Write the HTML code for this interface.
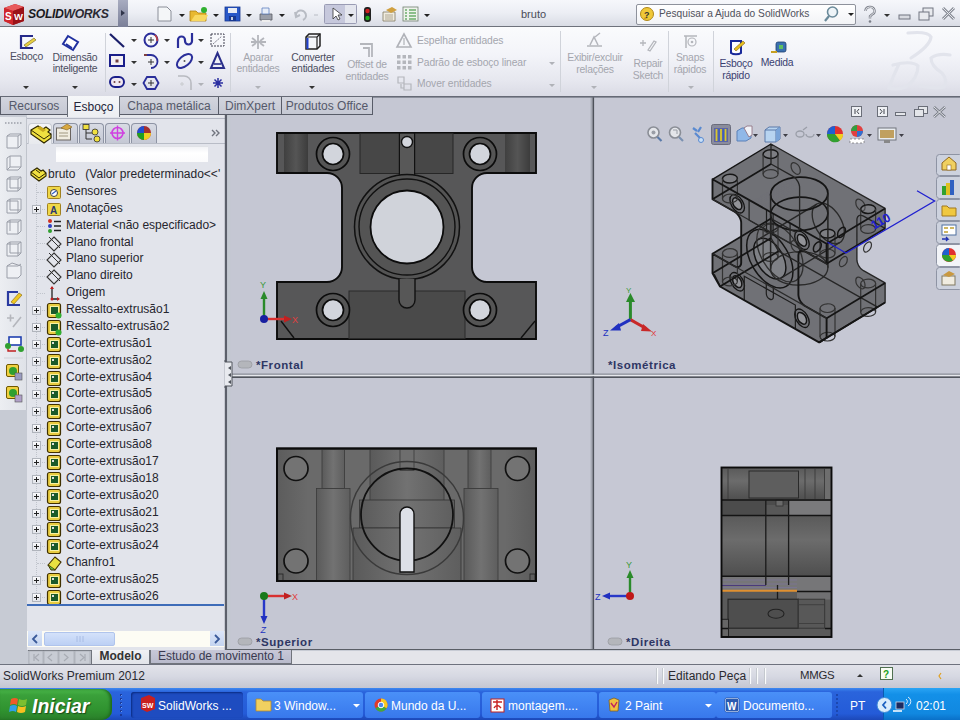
<!DOCTYPE html>
<html><head><meta charset="utf-8">
<style>
*{margin:0;padding:0;box-sizing:border-box}
html,body{width:960px;height:720px;overflow:hidden;background:#d6d9df;font-family:"Liberation Sans",sans-serif;font-size:11px;color:#000}
.a{position:absolute}
.t{position:absolute;white-space:nowrap;line-height:1}
#title{left:0;top:0;width:960px;height:27px;background:linear-gradient(#f6f7fb 0%,#eceef4 50%,#d9dce5 100%);border-bottom:1px solid #6e727c}
#logo{left:0;top:0;width:118px;height:26px;background:linear-gradient(#e8e9f0,#c9ccd7)}
#ribbon{left:0;top:27px;width:960px;height:69px;background:linear-gradient(#fafbfd 0%,#f3f4f9 40%,#e6e7ef 78%,#dadbe5 100%)}
#tabs{left:0;top:96px;width:960px;height:19px;background:#d0d3da;border-top:1.5px solid #666a76}
.tab{position:absolute;z-index:3;top:97px;height:18px;background:linear-gradient(#d3d5de,#c5c8d3);border:1px solid #585c68;border-top:none;color:#55596a;font-size:12px;text-align:center;line-height:18px}
#lefttb{left:0;top:115px;width:27px;height:535px;background:#c7cbd4}
#lefttb2{left:0;top:117px;width:27px;height:293px;background:linear-gradient(90deg,#eceef2,#dfe2e8);border-right:1px solid #c0c4cc}
#fm{left:27px;top:115px;width:199px;height:535px;background:#e5e7ec}
#vp{left:226px;top:97px;width:734px;height:553px;background:#c8cbd3}
#btabs{left:0;top:650px;width:960px;height:15px;background:#c7cbd4}
#status{left:0;top:664px;width:960px;height:24px;background:linear-gradient(#e2e3ea 0%,#d6d8e2 50%,#c4c6d2 100%);border-top:1.5px solid #6e727e}
#taskbar{left:0;top:688px;width:960px;height:32px;background:linear-gradient(#3d88f0 0%,#2a64dc 12%,#245bd8 80%,#1c48b8 100%)}
.rt{color:#4b4d60;font-size:10.4px;letter-spacing:-.25px;text-align:center}
.dis{color:#a4a6ae}
.arr{position:absolute;width:0;height:0;border-left:3px solid transparent;border-right:3px solid transparent;border-top:3px solid #333}
</style></head><body>
<!-- TITLE BAR -->
<div id="title" class="a"></div>
<div id="logo" class="a"></div>
<div class="a" style="left:118px;top:0;width:10px;height:27px;background:linear-gradient(#a8acc0,#7a7f98)"></div>
<div class="arr" style="left:121px;top:10px;border-top:3px solid transparent;border-bottom:3px solid transparent;border-left:4px solid #30354a;border-right:none"></div>


<!-- logo -->
<svg class="a" style="left:2px;top:2px" width="26" height="24" viewBox="0 0 26 24">
<path d="M2,6 L13,2 L22,5 L22,19 L11,23 L2,19 Z" fill="#b81c22"/>
<path d="M2,6 L13,2 L22,5 L11,9 Z" fill="#e85a5c"/>
<path d="M11,9 L22,5 L22,19 L11,23 Z" fill="#9a1218"/>
<path d="M2,6 L11,9 L11,23 L2,19 Z" fill="#d0262c"/>
<text x="3" y="18" font-size="10" font-weight="bold" fill="#fff" font-family="Liberation Sans">S</text>
<text x="12" y="18" font-size="9.5" font-weight="bold" fill="#fff" font-family="Liberation Sans">W</text>
</svg>
<div class="t" style="left:28px;top:8px;font-size:12.2px;font-weight:bold;font-style:italic;color:#1a1a22;letter-spacing:-.35px">SOLID<span style="font-weight:bold;color:#2a2a34">WORKS</span></div>
<!-- quick access -->
<svg class="a" style="left:150px;top:4px" width="290" height="20" viewBox="150 4 290 20">
<path d="M158,7 H167 L171,11 V21 H158 Z" fill="#f4f6f8" stroke="#8a8e98" stroke-width="1"/>
<path d="M179,14 h6 l-3,3 z M213,14 h6 l-3,3 z M246,14 h6 l-3,3 z M279,14 h6 l-3,3 z M424,14 h6 l-3,3 z" fill="#222"/>
<path d="M190,11 h6 l2,2 h8 v8 h-16 z" fill="#e8b830" stroke="#b08010" stroke-width=".8"/>
<path d="M191,21 l4,-6 h13 l-3,6 z" fill="#f8d860"/>
<circle cx="204" cy="10" r="3" fill="#30b030"/>
<rect x="225" y="7" width="15" height="14" fill="#2858c8" stroke="#183890" stroke-width=".8"/>
<rect x="228" y="8" width="9" height="5" fill="#e8ecf4"/>
<rect x="229" y="16" width="7" height="5" fill="#183890"/>
<rect x="231" y="17" width="2" height="3" fill="#c8d0e0"/>
<path d="M260,14 h12 v6 h-12 z" fill="#9a9ea8" stroke="#5a5e66" stroke-width=".8"/>
<path d="M262,8 h7 v6 h-7 z" fill="#e8eef8" stroke="#6080c0" stroke-width=".8"/>
<path d="M262,20 h8 v2 h-8 z" fill="#eee" />
<path d="M296,16 a5,5 0 1 1 7,4 M295,12 l1,5 l4,-2" fill="none" stroke="#b8bcc4" stroke-width="2"/>
<path d="M314,15 h4" stroke="#b8bcc4" stroke-width="1"/>
<rect x="324.5" y="4.5" width="32" height="19" fill="#c6c8dc" stroke="#9a9cb4" stroke-width="1" rx="1"/>
<rect x="345" y="5" width="11" height="18" fill="#e4e6ee"/>
<path d="M333,8 V19 L336,16 L338,20 L340,19 L338,15 L342,15 Z" fill="#fff" stroke="#333" stroke-width=".8"/>
<path d="M348,14 h6 l-3,3 z" fill="#222"/>
<rect x="364" y="7" width="7" height="15" rx="3" fill="#202020"/>
<circle cx="367.5" cy="11" r="2.2" fill="#d02020"/><circle cx="367.5" cy="18" r="2.2" fill="#20b020"/>
<path d="M383,12 h12 v9 h-12 z" fill="#f0ece0" stroke="#807860" stroke-width=".8"/>
<path d="M386,10 l6,-3 l5,3 l-6,3 z" fill="#d0a040"/>
<path d="M385,15 h8 M385,17 h8 M385,19 h8" stroke="#a09880" stroke-width=".8"/>
<rect x="403" y="7" width="15" height="14" fill="#eef2ec" stroke="#708070" stroke-width=".8"/>
<path d="M405,10 h2 M409,10 h7 M405,13 h2 M409,13 h7 M405,16 h2 M409,16 h7 M405,19 h2 M409,19 h7" stroke="#2a8a2a" stroke-width="1"/>
</svg>
<div class="t" style="left:521px;top:9px;font-size:11px;color:#4a4c58">bruto</div>
<!-- search -->
<div class="a" style="left:636px;top:4px;width:220px;height:21px;background:linear-gradient(#ffffff,#f2f3f6);border:1px solid #8e929c;border-radius:2px"></div>
<svg class="a" style="left:639px;top:6px" width="18" height="17" viewBox="0 0 18 17"><circle cx="8" cy="8" r="6.5" fill="#f0c838" stroke="#b08818" stroke-width="1"/><path d="M4,14 l2,-3 l3,1z" fill="#d0a020"/><text x="5" y="12" font-size="9" font-weight="bold" fill="#333" font-family="Liberation Sans">?</text></svg>
<div class="t" style="left:659px;top:9px;font-size:10.2px;color:#50525c">Pesquisar a Ajuda do SolidWorks</div>
<svg class="a" style="left:822px;top:5px" width="40" height="20" viewBox="822 5 40 20"><circle cx="832.5" cy="12" r="5" fill="#eef4f8" stroke="#6a8a9a" stroke-width="1.6"/><path d="M829,16 L825,21" stroke="#6a8a9a" stroke-width="2.2"/><path d="M848,13 h6 l-3,3 z" fill="#222"/></svg>
<svg class="a" style="left:860px;top:4px" width="100" height="22" viewBox="860 4 100 22">
<path d="M865.5,11 a4.5,4 0 1 1 6.5,3.5 l-2,1.8 v2.2" fill="none" stroke="#7a7e88" stroke-width="2.4"/><path d="M865.5,11 a4.5,4 0 1 1 6.5,3.5 l-2,1.8 v2.2" fill="none" stroke="#f4f5f8" stroke-width=".9"/>
<circle cx="870" cy="21.5" r="1.3" fill="#7a7e88"/>
<path d="M884,14 h6 l-3,3 z" fill="#333"/>
<rect x="899" y="15" width="11" height="4" fill="#d8dae0" stroke="#707480" stroke-width="1"/>
<rect x="923" y="8" width="10" height="8" fill="#e8eaee" stroke="#707480" stroke-width="1"/>
<rect x="919" y="12" width="10" height="8" fill="#e8eaee" stroke="#707480" stroke-width="1"/>
<path d="M943,8 l11,11 M954,8 l-11,11" stroke="#8a8e98" stroke-width="3"/>
<path d="M943,8 l11,11 M954,8 l-11,11" stroke="#e4e6ea" stroke-width="1"/>
</svg>

<!-- RIBBON -->
<div id="ribbon" class="a"></div>


<svg class="a" style="left:0;top:27px" width="960" height="69" viewBox="0 27 960 69">
<!-- separators -->
<path d="M105.5,33 V92 M230.5,33 V92 M560.5,31 V92 M668.5,31 V92 M713.5,31 V92" stroke="#d0d3da" stroke-width="1"/>
<!-- Esboco icon -->
<path d="M33,36 H21 V48 H33" fill="none" stroke="#262a8a" stroke-width="2.2"/>
<path d="M24,45 L34,38 L36,40 L26,47 Z" fill="#e8d040" stroke="#706020" stroke-width=".6"/>
<!-- dimensao icon -->
<path d="M68,36 L78,42 L73,50 L63,44 Z" fill="#fff" stroke="#2030a0" stroke-width="2"/>
<path d="M66,44 l6,4" stroke="#2030a0" stroke-width="1.6"/>
<!-- arrows -->
<path d="M23,86 h6 l-3,3 z M72,86 h6 l-3,3 z M131,39 h6 l-3,3 z M164,39 h6 l-3,3 z M198,39 h6 l-3,3 z M131,61 h6 l-3,3 z M164,61 h6 l-3,3 z M198,61 h6 l-3,3 z M131,83 h6 l-3,3 z M309,86 h6 l-3,3 z" fill="#333"/>
<path d="M255,86 h6 l-3,3 z M198,83 h6 l-3,3 z M549,62 h6 l-3,3 z M549,84 h6 l-3,3 z M591,86 h6 l-3,3 z M688,86 h6 l-3,3 z" fill="#b0b2b8"/>
<!-- line -->
<path d="M110,34 L124,47" stroke="#1a1e6a" stroke-width="2.2"/>
<!-- circle -->
<circle cx="151" cy="40" r="6.5" fill="none" stroke="#2a2e9a" stroke-width="2"/>
<path d="M148,40 h6 M151,37 v6" stroke="#333" stroke-width="1"/>
<path d="M155,35 a6.5,6.5 0 0 1 2,6" stroke="#c04040" stroke-width="1.6" fill="none"/>
<!-- spline -->
<path d="M178,48 V40 a3.5,3.5 0 0 1 7,0 v1 a3.5,3.5 0 0 0 7,0 V33" fill="none" stroke="#2a2e9a" stroke-width="2.2"/>
<!-- grid -->
<rect x="211" y="34" width="13" height="12" fill="none" stroke="#404050" stroke-width="1" stroke-dasharray="2,1"/>
<path d="M213,44 L222,36" stroke="#606070" stroke-width=".8" stroke-dasharray="2,1"/>
<!-- rect -->
<rect x="110" y="55" width="14" height="11" fill="#f4f0f4" stroke="#1a1e8a" stroke-width="2"/>
<rect x="115.5" y="59.5" width="3" height="3" fill="#704040"/>
<!-- arc -->
<path d="M144,55 H151 a6.5,6.5 0 0 1 0,13" fill="none" stroke="#2a2e9a" stroke-width="1.8"/>
<path d="M144,55 h3" stroke="#804040" stroke-width="2"/>
<path d="M148,62 h6 M151,59 v6" stroke="#333" stroke-width="1"/>
<!-- ellipse -->
<ellipse cx="184.5" cy="61" rx="9" ry="5" transform="rotate(-40 184.5 61)" fill="none" stroke="#2a2e9a" stroke-width="2"/>
<circle cx="184.5" cy="61" r="1" fill="#555"/>
<!-- text A -->
<path d="M211,68 L217.5,53 L224,68 Z" fill="none" stroke="#2a2e8a" stroke-width="2"/>
<path d="M214,64 h7" stroke="#2a2e8a" stroke-width="1.6"/>
<!-- slot -->
<rect x="110" y="77" width="14" height="10" rx="5" fill="#f0e8f0" stroke="#1a1e8a" stroke-width="2"/>
<circle cx="114.5" cy="82" r="1" fill="#704040"/><circle cx="119.5" cy="82" r="1" fill="#704040"/>
<!-- polygon -->
<path d="M147,77 h8 l3.5,6 l-3.5,6 h-8 l-3.5,-6 z" fill="none" stroke="#2a2e9a" stroke-width="1.8"/>
<path d="M148,83 h6 M151,80 v6" stroke="#333" stroke-width="1"/>
<!-- fillet (disabled) -->
<path d="M178,76 h6 a7,7 0 0 1 7,7 v7" fill="none" stroke="#b8bac0" stroke-width="1.6"/>
<path d="M180,84 h4 M182,82 v4" stroke="#c8cace" stroke-width="1"/>
<!-- point -->
<path d="M213,83 h10 M218,78 v10 M214.5,79.5 l7,7 M221.5,79.5 l-7,7" stroke="#2a2ea0" stroke-width="1.5"/>
<!-- Aparar -->
<path d="M251,42 h15 M258,35 v14 M252,38 l4,3 M264,38 l-4,3 M252,46 l4,-3 M264,46 l-4,-3" stroke="#b4b6bc" stroke-width="1.8"/>
<!-- converter -->
<path d="M306,37 l3,-3 h11 v12 l-3,3 h-11 z" fill="#f4f6fa" stroke="#202020" stroke-width="1.5"/>
<path d="M306,37 h11 v12 M317,37 l3,-3" fill="none" stroke="#202020" stroke-width="1.2"/>
<path d="M307.5,38 v11" stroke="#2040d0" stroke-width="2"/>
<!-- offset -->
<path d="M360,44 h12 v13 M363,48 h6 v9" fill="none" stroke="#b4b6bc" stroke-width="1.8"/>
<!-- espelhar -->
<path d="M404,34 L397,47 H411 Z" fill="none" stroke="#b0b2b8" stroke-width="1.6"/>
<path d="M404,38 v7" stroke="#b0b2b8" stroke-width="1.2"/>
<!-- padrao grid -->
<g fill="#b4b6bc"><rect x="397" y="55" width="3.5" height="3.5"/><rect x="402.5" y="55" width="3.5" height="3.5"/><rect x="408" y="55" width="3.5" height="3.5"/>
<rect x="397" y="60.5" width="3.5" height="3.5"/><rect x="402.5" y="60.5" width="3.5" height="3.5"/><rect x="408" y="60.5" width="3.5" height="3.5"/>
<rect x="397" y="66" width="3.5" height="3.5"/><rect x="402.5" y="66" width="3.5" height="3.5"/><rect x="408" y="66" width="3.5" height="3.5"/></g>
<!-- mover -->
<path d="M398,77 h6 v6 h-6 z M404,84 h7 v6 h-7 z M401,84 v4 h3" fill="none" stroke="#b4b6bc" stroke-width="1.2"/>
<!-- exibir relations -->
<path d="M587,46 h15 M590,45 l4,-8 l4,8 M595,37 l5,-4" stroke="#b4b6bc" stroke-width="1.5" fill="none"/>
<!-- repair -->
<path d="M640,43 h6 M643,40 v6 M648,50 l6,-9 l2,1 l-6,9 z" stroke="#b4b6bc" stroke-width="1.3" fill="none"/>
<!-- snaps -->
<path d="M684,36 h13 M686,36 v12" stroke="#b4b6bc" stroke-width="1.5"/>
<circle cx="692" cy="42" r="4" fill="none" stroke="#b4b6bc" stroke-width="1.2"/><circle cx="692" cy="42" r="1.3" fill="#b4b6bc"/>
<!-- esboco rapido -->
<path d="M731,41 h10 v12 a6,3 0 0 1 -10,0 z" fill="#fff" stroke="#1a2a9a" stroke-width="2"/>
<path d="M734,49 l9,-8 l2,2 l-9,8 z" fill="#e8c020" stroke="#806010" stroke-width=".6"/>
<!-- medida -->
<rect x="776" y="42" width="10" height="10" rx="2" fill="#3a70b0" stroke="#204070" stroke-width=".8"/>
<rect x="779" y="45" width="4" height="4" fill="#60c060"/>
<path d="M771,52 h6" stroke="#c8a020" stroke-width="2"/>
<!-- DS watermark -->
<g fill="none" stroke="#e2e4ec" stroke-width="3.2" stroke-linecap="round">
<path d="M908,33 Q928,31 931,37 Q930,46 911,58"/>
<path d="M893,65 Q912,60 918,66 Q918,78 906,87 Q897,90 889,88 Q893,76 899,64"/>
<path d="M950,55 Q938,53 931,58 Q931,66 942,73 Q948,80 944,87 Q935,89 920,86"/>
</g>
</svg>
<div class="t rt" style="left:6px;top:52px;width:41px">Esboço</div>
<div class="t rt" style="left:47px;top:52px;width:56px;line-height:11px">Dimensão<br>inteligente</div>
<div class="t rt dis" style="left:233px;top:52px;width:50px;line-height:11px">Aparar<br>entidades</div>
<div class="t rt" style="left:286px;top:52px;width:54px;line-height:11px">Converter<br>entidades</div>
<div class="t rt dis" style="left:342px;top:59px;width:50px;line-height:12px">Offset de<br>entidades</div>
<div class="t dis" style="left:417px;top:36px;font-size:10.3px;letter-spacing:-.1px">Espelhar entidades</div>
<div class="t dis" style="left:417px;top:58px;font-size:10.3px;letter-spacing:-.1px">Padrão de esboço linear</div>
<div class="t dis" style="left:417px;top:79px;font-size:10.3px;letter-spacing:-.1px">Mover entidades</div>
<div class="t rt dis" style="left:563px;top:52px;width:64px;line-height:12px">Exibir/excluir<br>relações</div>
<div class="t rt dis" style="left:629px;top:58px;width:38px;line-height:12px">Repair<br>Sketch</div>
<div class="t rt dis" style="left:668px;top:52px;width:44px;line-height:12px">Snaps<br>rápidos</div>
<div class="t rt" style="left:714px;top:58px;width:44px;line-height:12px;color:#3a3e70">Esboço<br>rápido</div>
<div class="t rt" style="left:756px;top:58px;width:42px;color:#3a3e70">Medida</div>

<!-- TABS -->
<div id="tabs" class="a"></div>


<div class="tab" style="left:0;width:68px">Recursos</div>
<div class="a" style="left:67px;top:96px;width:53px;height:21px;background:linear-gradient(#f6f7f9,#eceef2);border-left:1px solid #6a6f7a;border-right:1px solid #6a6f7a;color:#24263a;font-size:12px;text-align:center;line-height:19px;padding-top:2px;z-index:4">Esboço</div>
<div class="tab" style="left:119px;width:100px">Chapa metálica</div>
<div class="tab" style="left:218px;width:64px">DimXpert</div>
<div class="tab" style="left:281px;width:92px">Produtos Office</div>

<!-- LEFT -->
<div id="lefttb" class="a"></div>
<div id="lefttb2" class="a"></div>
<div id="fm" class="a"></div>
<!--TREE-START-->
<div class="a" style="left:27px;top:117px;width:198px;height:533px;background:#e2e4eb"></div>
<div class="a" style="left:27px;top:143px;width:198px;height:1px;background:#b8bcc6"></div>
<div class="a" style="left:27px;top:118px;width:198px;height:1px;background:#b4b8c4"></div>
<div class="a" style="left:28px;top:123px;width:24px;height:21px;background:linear-gradient(#f4f5f8,#e8eaee);border:1px solid #c8ccd4;border-bottom:none;border-radius:4px 4px 0 0"></div>
<div class="a" style="left:53px;top:123px;width:25px;height:20px;background:linear-gradient(#d8dbe4,#c4c8d4);border:1px solid #8e94a4;border-bottom:none;border-radius:4px 4px 0 0"></div>
<div class="a" style="left:79px;top:123px;width:25px;height:20px;background:linear-gradient(#d8dbe4,#c4c8d4);border:1px solid #8e94a4;border-bottom:none;border-radius:4px 4px 0 0"></div>
<div class="a" style="left:105px;top:123px;width:25px;height:20px;background:linear-gradient(#d8dbe4,#c4c8d4);border:1px solid #8e94a4;border-bottom:none;border-radius:4px 4px 0 0"></div>
<div class="a" style="left:131px;top:123px;width:26px;height:20px;background:linear-gradient(#d8dbe4,#c4c8d4);border:1px solid #8e94a4;border-bottom:none;border-radius:4px 4px 0 0"></div>
<svg class="a" style="left:27px;top:117px" width="199" height="70" viewBox="27 117 199 70">
<path d="M31,130 l7,-4 l5,3 l3,-2 l4,3 l-2,2 l3,2 v4 l-7,5 l-13,-9 z" fill="#f0e040" stroke="#302800" stroke-width="1.2"/>
<path d="M31,130 l13,9 l7,-5" fill="none" stroke="#302800" stroke-width="1"/><path d="M37,128 l3,-2 l6,4 l-3,2 z" fill="#c8a820"/>
<rect x="56.5" y="128" width="14" height="12" fill="#f0ece0" stroke="#6a6460" stroke-width="1"/>
<path d="M59,133 h9 M59,136 h9" stroke="#a09880" stroke-width="1"/>
<path d="M61,128 l6,-4 l5,3 l-5,3 z" fill="#d8a840" stroke="#806020" stroke-width=".6"/>
<path d="M86,127 v12 h6 M86,133 h6" fill="none" stroke="#303030" stroke-width="1"/>
<rect x="83" y="124.5" width="6" height="5" fill="#f0e040" stroke="#303030" stroke-width=".8"/>
<circle cx="95" cy="132" r="3" fill="#f0e040" stroke="#303030" stroke-width=".8"/>
<circle cx="97" cy="139" r="3" fill="#f0e040" stroke="#303030" stroke-width=".8"/>
<circle cx="117.5" cy="133" r="5.5" fill="none" stroke="#d040e0" stroke-width="1.6"/>
<path d="M110,133 h15 M117.5,125.5 v15" stroke="#d040e0" stroke-width="1.4"/>
<circle cx="144" cy="133" r="7" fill="#e03030"/>
<path d="M144,133 L137,133 A7,7 0 0 0 144,140 Z" fill="#20a020"/>
<path d="M144,133 L144,140 A7,7 0 0 0 151,133 Z" fill="#f0d020"/>
<path d="M144,133 L137,133 A7,7 0 0 1 144,126 Z" fill="#2050d0"/>
<path d="M144,133 L144,126 A7,7 0 0 1 151,133 Z" fill="#303030" opacity=".35"/>
<path d="M212,130 l3,3 l-3,3 M216,130 l3,3 l-3,3" fill="none" stroke="#70747e" stroke-width="1.4"/>
</svg>

<div class="a" style="left:56px;top:146px;width:152px;height:16px;background:linear-gradient(#f2f3f6,#ffffff 40%,#fbfbfc);border-top:1px solid #e0e2e6"></div>
<div class="a" style="left:36px;top:184px;width:0;height:413px;border-left:1px dotted #c0c4cc"></div>
<svg class="a" style="left:29px;top:166px" width="18" height="18" viewBox="0 0 18 18"><path d="M2,6 l6,-4 l4,3 l2,-1 l3,3 v3 l-7,5 l-8,-6 z" fill="#f0e040" stroke="#302800" stroke-width="1.2"/><path d="M2,6 l8,6 l7,-5 M7,4 l4,3" fill="none" stroke="#302800" stroke-width="1"/></svg>
<div class="t" style="left:48px;top:168px;font-size:12px;color:#26262e">bruto&nbsp;&nbsp;&nbsp;(Valor predeterminado&lt;&lt;'</div>
<svg class="a" style="left:46px;top:184px" width="17" height="17" viewBox="0 0 17 17"><rect x="1.5" y="2.5" width="13" height="12" rx="1" fill="#f0d848" stroke="#a08020" stroke-width="1"/><circle cx="8" cy="9" r="3.5" fill="#fff" stroke="#404040" stroke-width="1"/><path d="M6,10 l4,-3" stroke="#3060c0" stroke-width="1.2"/></svg>
<div class="a" style="left:37px;top:192px;width:8px;height:0;border-top:1px dotted #c0c4cc"></div>
<div class="t" style="left:66px;top:185px;font-size:12px;color:#26262e">Sensores</div>
<svg class="a" style="left:46px;top:201px" width="17" height="17" viewBox="0 0 17 17"><rect x="1.5" y="2.5" width="13" height="12" rx="1" fill="#f0d848" stroke="#a08020" stroke-width="1"/><text x="4" y="13" font-size="10" font-weight="bold" fill="#2a3a70" font-family="Liberation Sans">A</text></svg>
<div class="a" style="left:37px;top:209px;width:8px;height:0;border-top:1px dotted #c0c4cc"></div>
<div class="a" style="left:32px;top:205px;width:9px;height:9px;border:1px solid #b0b4bc;background:linear-gradient(#fafafc,#e2e4ea)"><div class="a" style="left:1px;top:3px;width:5px;height:1px;background:#222"></div><div class="a" style="left:3px;top:1px;width:1px;height:5px;background:#222"></div></div>
<div class="t" style="left:66px;top:202px;font-size:12px;color:#26262e">Anotações</div>
<svg class="a" style="left:46px;top:218px" width="17" height="17" viewBox="0 0 17 17"><circle cx="4" cy="3" r="2" fill="#d03020"/><circle cx="4" cy="8" r="2" fill="#3040c0"/><circle cx="4" cy="13" r="2" fill="#30a030"/><path d="M8,3.5 h7 M8,8 h7 M8,12.5 h7" stroke="#222" stroke-width="1.6"/></svg>
<div class="a" style="left:37px;top:226px;width:8px;height:0;border-top:1px dotted #c0c4cc"></div>
<div class="t" style="left:66px;top:219px;font-size:12px;color:#26262e">Material &lt;não especificado&gt;</div>
<svg class="a" style="left:46px;top:235px" width="17" height="17" viewBox="0 0 17 17"><path d="M8,2 L15,9 L8,16 L1,9 Z" fill="none" stroke="#333" stroke-width="1.1"/><path d="M3,2 L14,13" stroke="#333" stroke-width="1"/></svg>
<div class="a" style="left:37px;top:243px;width:8px;height:0;border-top:1px dotted #c0c4cc"></div>
<div class="t" style="left:66px;top:236px;font-size:12px;color:#26262e">Plano frontal</div>
<svg class="a" style="left:46px;top:251px" width="17" height="17" viewBox="0 0 17 17"><path d="M8,2 L15,9 L8,16 L1,9 Z" fill="none" stroke="#333" stroke-width="1.1"/><path d="M3,2 L14,13" stroke="#333" stroke-width="1"/></svg>
<div class="a" style="left:37px;top:259px;width:8px;height:0;border-top:1px dotted #c0c4cc"></div>
<div class="t" style="left:66px;top:252px;font-size:12px;color:#26262e">Plano superior</div>
<svg class="a" style="left:46px;top:268px" width="17" height="17" viewBox="0 0 17 17"><path d="M8,2 L15,9 L8,16 L1,9 Z" fill="none" stroke="#333" stroke-width="1.1"/><path d="M3,2 L14,13" stroke="#333" stroke-width="1"/></svg>
<div class="a" style="left:37px;top:276px;width:8px;height:0;border-top:1px dotted #c0c4cc"></div>
<div class="t" style="left:66px;top:269px;font-size:12px;color:#26262e">Plano direito</div>
<svg class="a" style="left:46px;top:285px" width="17" height="17" viewBox="0 0 17 17"><path d="M6,2 v12 h7" fill="none" stroke="#222" stroke-width="1.3"/><path d="M4,4 l2,-3 l2,3" fill="#c02020"/><path d="M11,12 l3,2 l-3,2" fill="#c02020"/><circle cx="6" cy="14" r="1.5" fill="#c02020"/></svg>
<div class="a" style="left:37px;top:293px;width:8px;height:0;border-top:1px dotted #c0c4cc"></div>
<div class="t" style="left:66px;top:286px;font-size:12px;color:#26262e">Origem</div>
<svg class="a" style="left:46px;top:302px" width="17" height="17" viewBox="0 0 17 17"><rect x="1.5" y="1.5" width="13" height="14" rx="2" fill="#e8cc40" stroke="#403000" stroke-width="1.2"/><rect x="4.5" y="4.5" width="8" height="8" fill="#1a5a2a" stroke="#f8f0a0" stroke-width="1"/><circle cx="12.5" cy="13.5" r="3" fill="#30b030"/></svg>
<div class="a" style="left:37px;top:310px;width:8px;height:0;border-top:1px dotted #c0c4cc"></div>
<div class="a" style="left:32px;top:306px;width:9px;height:9px;border:1px solid #b0b4bc;background:linear-gradient(#fafafc,#e2e4ea)"><div class="a" style="left:1px;top:3px;width:5px;height:1px;background:#222"></div><div class="a" style="left:3px;top:1px;width:1px;height:5px;background:#222"></div></div>
<div class="t" style="left:66px;top:303px;font-size:12px;color:#26262e">Ressalto-extrusão1</div>
<svg class="a" style="left:46px;top:319px" width="17" height="17" viewBox="0 0 17 17"><rect x="1.5" y="1.5" width="13" height="14" rx="2" fill="#e8cc40" stroke="#403000" stroke-width="1.2"/><rect x="4.5" y="4.5" width="8" height="8" fill="#1a5a2a" stroke="#f8f0a0" stroke-width="1"/><circle cx="12.5" cy="13.5" r="3" fill="#30b030"/></svg>
<div class="a" style="left:37px;top:327px;width:8px;height:0;border-top:1px dotted #c0c4cc"></div>
<div class="a" style="left:32px;top:323px;width:9px;height:9px;border:1px solid #b0b4bc;background:linear-gradient(#fafafc,#e2e4ea)"><div class="a" style="left:1px;top:3px;width:5px;height:1px;background:#222"></div><div class="a" style="left:3px;top:1px;width:1px;height:5px;background:#222"></div></div>
<div class="t" style="left:66px;top:320px;font-size:12px;color:#26262e">Ressalto-extrusão2</div>
<svg class="a" style="left:46px;top:336px" width="17" height="17" viewBox="0 0 17 17"><rect x="1.5" y="1.5" width="13" height="14" rx="2" fill="#e8cc40" stroke="#403000" stroke-width="1.2"/><rect x="4.5" y="4.5" width="8" height="8" fill="#1a5a2a" stroke="#f8f0a0" stroke-width="1"/><rect x="6" y="6" width="2" height="2" fill="#e0e0e0"/></svg>
<div class="a" style="left:37px;top:344px;width:8px;height:0;border-top:1px dotted #c0c4cc"></div>
<div class="a" style="left:32px;top:340px;width:9px;height:9px;border:1px solid #b0b4bc;background:linear-gradient(#fafafc,#e2e4ea)"><div class="a" style="left:1px;top:3px;width:5px;height:1px;background:#222"></div><div class="a" style="left:3px;top:1px;width:1px;height:5px;background:#222"></div></div>
<div class="t" style="left:66px;top:337px;font-size:12px;color:#26262e">Corte-extrusão1</div>
<svg class="a" style="left:46px;top:353px" width="17" height="17" viewBox="0 0 17 17"><rect x="1.5" y="1.5" width="13" height="14" rx="2" fill="#e8cc40" stroke="#403000" stroke-width="1.2"/><rect x="4.5" y="4.5" width="8" height="8" fill="#1a5a2a" stroke="#f8f0a0" stroke-width="1"/><rect x="6" y="6" width="2" height="2" fill="#e0e0e0"/></svg>
<div class="a" style="left:37px;top:361px;width:8px;height:0;border-top:1px dotted #c0c4cc"></div>
<div class="a" style="left:32px;top:357px;width:9px;height:9px;border:1px solid #b0b4bc;background:linear-gradient(#fafafc,#e2e4ea)"><div class="a" style="left:1px;top:3px;width:5px;height:1px;background:#222"></div><div class="a" style="left:3px;top:1px;width:1px;height:5px;background:#222"></div></div>
<div class="t" style="left:66px;top:354px;font-size:12px;color:#26262e">Corte-extrusão2</div>
<svg class="a" style="left:46px;top:370px" width="17" height="17" viewBox="0 0 17 17"><rect x="1.5" y="1.5" width="13" height="14" rx="2" fill="#e8cc40" stroke="#403000" stroke-width="1.2"/><rect x="4.5" y="4.5" width="8" height="8" fill="#1a5a2a" stroke="#f8f0a0" stroke-width="1"/><rect x="6" y="6" width="2" height="2" fill="#e0e0e0"/></svg>
<div class="a" style="left:37px;top:378px;width:8px;height:0;border-top:1px dotted #c0c4cc"></div>
<div class="a" style="left:32px;top:374px;width:9px;height:9px;border:1px solid #b0b4bc;background:linear-gradient(#fafafc,#e2e4ea)"><div class="a" style="left:1px;top:3px;width:5px;height:1px;background:#222"></div><div class="a" style="left:3px;top:1px;width:1px;height:5px;background:#222"></div></div>
<div class="t" style="left:66px;top:371px;font-size:12px;color:#26262e">Corte-extrusão4</div>
<svg class="a" style="left:46px;top:386px" width="17" height="17" viewBox="0 0 17 17"><rect x="1.5" y="1.5" width="13" height="14" rx="2" fill="#e8cc40" stroke="#403000" stroke-width="1.2"/><rect x="4.5" y="4.5" width="8" height="8" fill="#1a5a2a" stroke="#f8f0a0" stroke-width="1"/><rect x="6" y="6" width="2" height="2" fill="#e0e0e0"/></svg>
<div class="a" style="left:37px;top:394px;width:8px;height:0;border-top:1px dotted #c0c4cc"></div>
<div class="a" style="left:32px;top:390px;width:9px;height:9px;border:1px solid #b0b4bc;background:linear-gradient(#fafafc,#e2e4ea)"><div class="a" style="left:1px;top:3px;width:5px;height:1px;background:#222"></div><div class="a" style="left:3px;top:1px;width:1px;height:5px;background:#222"></div></div>
<div class="t" style="left:66px;top:387px;font-size:12px;color:#26262e">Corte-extrusão5</div>
<svg class="a" style="left:46px;top:403px" width="17" height="17" viewBox="0 0 17 17"><rect x="1.5" y="1.5" width="13" height="14" rx="2" fill="#e8cc40" stroke="#403000" stroke-width="1.2"/><rect x="4.5" y="4.5" width="8" height="8" fill="#1a5a2a" stroke="#f8f0a0" stroke-width="1"/><rect x="6" y="6" width="2" height="2" fill="#e0e0e0"/></svg>
<div class="a" style="left:37px;top:411px;width:8px;height:0;border-top:1px dotted #c0c4cc"></div>
<div class="a" style="left:32px;top:407px;width:9px;height:9px;border:1px solid #b0b4bc;background:linear-gradient(#fafafc,#e2e4ea)"><div class="a" style="left:1px;top:3px;width:5px;height:1px;background:#222"></div><div class="a" style="left:3px;top:1px;width:1px;height:5px;background:#222"></div></div>
<div class="t" style="left:66px;top:404px;font-size:12px;color:#26262e">Corte-extrusão6</div>
<svg class="a" style="left:46px;top:420px" width="17" height="17" viewBox="0 0 17 17"><rect x="1.5" y="1.5" width="13" height="14" rx="2" fill="#e8cc40" stroke="#403000" stroke-width="1.2"/><rect x="4.5" y="4.5" width="8" height="8" fill="#1a5a2a" stroke="#f8f0a0" stroke-width="1"/><rect x="6" y="6" width="2" height="2" fill="#e0e0e0"/></svg>
<div class="a" style="left:37px;top:428px;width:8px;height:0;border-top:1px dotted #c0c4cc"></div>
<div class="a" style="left:32px;top:424px;width:9px;height:9px;border:1px solid #b0b4bc;background:linear-gradient(#fafafc,#e2e4ea)"><div class="a" style="left:1px;top:3px;width:5px;height:1px;background:#222"></div><div class="a" style="left:3px;top:1px;width:1px;height:5px;background:#222"></div></div>
<div class="t" style="left:66px;top:421px;font-size:12px;color:#26262e">Corte-extrusão7</div>
<svg class="a" style="left:46px;top:437px" width="17" height="17" viewBox="0 0 17 17"><rect x="1.5" y="1.5" width="13" height="14" rx="2" fill="#e8cc40" stroke="#403000" stroke-width="1.2"/><rect x="4.5" y="4.5" width="8" height="8" fill="#1a5a2a" stroke="#f8f0a0" stroke-width="1"/><rect x="6" y="6" width="2" height="2" fill="#e0e0e0"/></svg>
<div class="a" style="left:37px;top:445px;width:8px;height:0;border-top:1px dotted #c0c4cc"></div>
<div class="a" style="left:32px;top:441px;width:9px;height:9px;border:1px solid #b0b4bc;background:linear-gradient(#fafafc,#e2e4ea)"><div class="a" style="left:1px;top:3px;width:5px;height:1px;background:#222"></div><div class="a" style="left:3px;top:1px;width:1px;height:5px;background:#222"></div></div>
<div class="t" style="left:66px;top:438px;font-size:12px;color:#26262e">Corte-extrusão8</div>
<svg class="a" style="left:46px;top:454px" width="17" height="17" viewBox="0 0 17 17"><rect x="1.5" y="1.5" width="13" height="14" rx="2" fill="#e8cc40" stroke="#403000" stroke-width="1.2"/><rect x="4.5" y="4.5" width="8" height="8" fill="#1a5a2a" stroke="#f8f0a0" stroke-width="1"/><rect x="6" y="6" width="2" height="2" fill="#e0e0e0"/></svg>
<div class="a" style="left:37px;top:462px;width:8px;height:0;border-top:1px dotted #c0c4cc"></div>
<div class="a" style="left:32px;top:458px;width:9px;height:9px;border:1px solid #b0b4bc;background:linear-gradient(#fafafc,#e2e4ea)"><div class="a" style="left:1px;top:3px;width:5px;height:1px;background:#222"></div><div class="a" style="left:3px;top:1px;width:1px;height:5px;background:#222"></div></div>
<div class="t" style="left:66px;top:455px;font-size:12px;color:#26262e">Corte-extrusão17</div>
<svg class="a" style="left:46px;top:471px" width="17" height="17" viewBox="0 0 17 17"><rect x="1.5" y="1.5" width="13" height="14" rx="2" fill="#e8cc40" stroke="#403000" stroke-width="1.2"/><rect x="4.5" y="4.5" width="8" height="8" fill="#1a5a2a" stroke="#f8f0a0" stroke-width="1"/><rect x="6" y="6" width="2" height="2" fill="#e0e0e0"/></svg>
<div class="a" style="left:37px;top:479px;width:8px;height:0;border-top:1px dotted #c0c4cc"></div>
<div class="a" style="left:32px;top:475px;width:9px;height:9px;border:1px solid #b0b4bc;background:linear-gradient(#fafafc,#e2e4ea)"><div class="a" style="left:1px;top:3px;width:5px;height:1px;background:#222"></div><div class="a" style="left:3px;top:1px;width:1px;height:5px;background:#222"></div></div>
<div class="t" style="left:66px;top:472px;font-size:12px;color:#26262e">Corte-extrusão18</div>
<svg class="a" style="left:46px;top:488px" width="17" height="17" viewBox="0 0 17 17"><rect x="1.5" y="1.5" width="13" height="14" rx="2" fill="#e8cc40" stroke="#403000" stroke-width="1.2"/><rect x="4.5" y="4.5" width="8" height="8" fill="#1a5a2a" stroke="#f8f0a0" stroke-width="1"/><rect x="6" y="6" width="2" height="2" fill="#e0e0e0"/></svg>
<div class="a" style="left:37px;top:496px;width:8px;height:0;border-top:1px dotted #c0c4cc"></div>
<div class="a" style="left:32px;top:492px;width:9px;height:9px;border:1px solid #b0b4bc;background:linear-gradient(#fafafc,#e2e4ea)"><div class="a" style="left:1px;top:3px;width:5px;height:1px;background:#222"></div><div class="a" style="left:3px;top:1px;width:1px;height:5px;background:#222"></div></div>
<div class="t" style="left:66px;top:489px;font-size:12px;color:#26262e">Corte-extrusão20</div>
<svg class="a" style="left:46px;top:505px" width="17" height="17" viewBox="0 0 17 17"><rect x="1.5" y="1.5" width="13" height="14" rx="2" fill="#e8cc40" stroke="#403000" stroke-width="1.2"/><rect x="4.5" y="4.5" width="8" height="8" fill="#1a5a2a" stroke="#f8f0a0" stroke-width="1"/><rect x="6" y="6" width="2" height="2" fill="#e0e0e0"/></svg>
<div class="a" style="left:37px;top:513px;width:8px;height:0;border-top:1px dotted #c0c4cc"></div>
<div class="a" style="left:32px;top:509px;width:9px;height:9px;border:1px solid #b0b4bc;background:linear-gradient(#fafafc,#e2e4ea)"><div class="a" style="left:1px;top:3px;width:5px;height:1px;background:#222"></div><div class="a" style="left:3px;top:1px;width:1px;height:5px;background:#222"></div></div>
<div class="t" style="left:66px;top:506px;font-size:12px;color:#26262e">Corte-extrusão21</div>
<svg class="a" style="left:46px;top:521px" width="17" height="17" viewBox="0 0 17 17"><rect x="1.5" y="1.5" width="13" height="14" rx="2" fill="#e8cc40" stroke="#403000" stroke-width="1.2"/><rect x="4.5" y="4.5" width="8" height="8" fill="#1a5a2a" stroke="#f8f0a0" stroke-width="1"/><rect x="6" y="6" width="2" height="2" fill="#e0e0e0"/></svg>
<div class="a" style="left:37px;top:529px;width:8px;height:0;border-top:1px dotted #c0c4cc"></div>
<div class="a" style="left:32px;top:525px;width:9px;height:9px;border:1px solid #b0b4bc;background:linear-gradient(#fafafc,#e2e4ea)"><div class="a" style="left:1px;top:3px;width:5px;height:1px;background:#222"></div><div class="a" style="left:3px;top:1px;width:1px;height:5px;background:#222"></div></div>
<div class="t" style="left:66px;top:522px;font-size:12px;color:#26262e">Corte-extrusão23</div>
<svg class="a" style="left:46px;top:538px" width="17" height="17" viewBox="0 0 17 17"><rect x="1.5" y="1.5" width="13" height="14" rx="2" fill="#e8cc40" stroke="#403000" stroke-width="1.2"/><rect x="4.5" y="4.5" width="8" height="8" fill="#1a5a2a" stroke="#f8f0a0" stroke-width="1"/><rect x="6" y="6" width="2" height="2" fill="#e0e0e0"/></svg>
<div class="a" style="left:37px;top:546px;width:8px;height:0;border-top:1px dotted #c0c4cc"></div>
<div class="a" style="left:32px;top:542px;width:9px;height:9px;border:1px solid #b0b4bc;background:linear-gradient(#fafafc,#e2e4ea)"><div class="a" style="left:1px;top:3px;width:5px;height:1px;background:#222"></div><div class="a" style="left:3px;top:1px;width:1px;height:5px;background:#222"></div></div>
<div class="t" style="left:66px;top:539px;font-size:12px;color:#26262e">Corte-extrusão24</div>
<svg class="a" style="left:46px;top:555px" width="17" height="17" viewBox="0 0 17 17"><path d="M2,10 l7,-8 l6,5 l-6,8 z" fill="#e8e040" stroke="#403000" stroke-width="1.1"/><path d="M2,10 l3,5 h4" fill="#60c040" stroke="#403000" stroke-width="1"/></svg>
<div class="a" style="left:37px;top:563px;width:8px;height:0;border-top:1px dotted #c0c4cc"></div>
<div class="t" style="left:66px;top:556px;font-size:12px;color:#26262e">Chanfro1</div>
<svg class="a" style="left:46px;top:572px" width="17" height="17" viewBox="0 0 17 17"><rect x="1.5" y="1.5" width="13" height="14" rx="2" fill="#e8cc40" stroke="#403000" stroke-width="1.2"/><rect x="4.5" y="4.5" width="8" height="8" fill="#1a5a2a" stroke="#f8f0a0" stroke-width="1"/><rect x="6" y="6" width="2" height="2" fill="#e0e0e0"/></svg>
<div class="a" style="left:37px;top:580px;width:8px;height:0;border-top:1px dotted #c0c4cc"></div>
<div class="a" style="left:32px;top:576px;width:9px;height:9px;border:1px solid #b0b4bc;background:linear-gradient(#fafafc,#e2e4ea)"><div class="a" style="left:1px;top:3px;width:5px;height:1px;background:#222"></div><div class="a" style="left:3px;top:1px;width:1px;height:5px;background:#222"></div></div>
<div class="t" style="left:66px;top:573px;font-size:12px;color:#26262e">Corte-extrusão25</div>
<svg class="a" style="left:46px;top:589px" width="17" height="17" viewBox="0 0 17 17"><rect x="1.5" y="1.5" width="13" height="14" rx="2" fill="#e8cc40" stroke="#403000" stroke-width="1.2"/><rect x="4.5" y="4.5" width="8" height="8" fill="#1a5a2a" stroke="#f8f0a0" stroke-width="1"/><rect x="6" y="6" width="2" height="2" fill="#e0e0e0"/></svg>
<div class="a" style="left:37px;top:597px;width:8px;height:0;border-top:1px dotted #c0c4cc"></div>
<div class="a" style="left:32px;top:593px;width:9px;height:9px;border:1px solid #b0b4bc;background:linear-gradient(#fafafc,#e2e4ea)"><div class="a" style="left:1px;top:3px;width:5px;height:1px;background:#222"></div><div class="a" style="left:3px;top:1px;width:1px;height:5px;background:#222"></div></div>
<div class="t" style="left:66px;top:590px;font-size:12px;color:#26262e">Corte-extrusão26</div>
<div class="a" style="left:27px;top:604px;width:197px;height:2px;background:#3e6cb8"></div>
<div class="a" style="left:27px;top:631px;width:198px;height:16px;background:#fdfcf4"></div>
<div class="a" style="left:28px;top:631px;width:14px;height:15px;background:linear-gradient(#dce6f8,#c4d4f0)"></div>
<div class="a" style="left:44px;top:632px;width:71px;height:14px;background:linear-gradient(#d4e2fa,#bcd0f4);border:1px solid #b0c4ec;border-radius:2px"></div>
<div class="a" style="left:210px;top:631px;width:14px;height:15px;background:linear-gradient(#dce6f8,#c4d4f0)"></div>
<svg class="a" style="left:28px;top:631px" width="197" height="16" viewBox="28 631 197 16"><path d="M37,635 l-4,4 l4,4" fill="none" stroke="#3a5a9a" stroke-width="1.8"/><path d="M215,635 l4,4 l-4,4" fill="none" stroke="#3a5a9a" stroke-width="1.8"/><path d="M77,636 v6 M80,636 v6 M83,636 v6" stroke="#a8bce4" stroke-width="1"/></svg>

<!--TREE-END-->
<!-- left toolbar icons -->
<svg class="a" style="left:0;top:115px" width="27" height="300" viewBox="0 115 27 300">
<path d="M5,123 h18" stroke="#9a9ea8" stroke-width="1.5" stroke-dasharray="1.5,1.5"/>
<g fill="#eef0f4" stroke="#9a9ea8" stroke-width="1">
<path d="M7,136 l3,-2 h11 v11 l-3,3 h-11 z"/><path d="M7,136 h11 v12 M18,136 l3,-2" fill="none"/>
<path d="M7,158 l3,-2 h11 v11 l-3,3 h-11 z"/><path d="M10,156 v11 h11 M10,167 l-3,3" fill="none"/>
<path d="M7,179 l3,-2 h11 v11 l-3,3 h-11 z"/><path d="M7,179 h11 v12 M18,179 l3,-2 M10,177 v11 h11" fill="none"/>
<path d="M7,201 l3,-2 h11 v11 l-3,3 h-11 z"/><path d="M7,201 h11 v12 M10,199 v11 h11" fill="none"/>
<path d="M7,222 l3,-2 h11 v11 l-3,3 h-11 z"/><path d="M7,222 h11 v12 M18,222 l3,-2 M10,220 v11" fill="none"/>
<path d="M7,244 l3,-2 h11 v11 l-3,3 h-11 z"/><path d="M7,244 h11 v12 M10,242 v11 h11 M18,244 l3,-2" fill="none"/>
<path d="M7,266 l5,-3 l9,3 v9 l-3,3 h-11 z"/><path d="M7,266 h11 l3,-2" fill="none"/>
</g>
<path d="M18,292 h-10 v13 h12" fill="none" stroke="#2a3aa0" stroke-width="2.2"/>
<path d="M11,302 l8,-9 l3,2 l-8,9 z" fill="#f0c820" stroke="#806010" stroke-width=".6"/>
<path d="M7,318 h7 M10.5,314.5 v7 M13,327 l8,-10" stroke="#b4b6bc" stroke-width="1.6"/>
<rect x="9" y="337" width="12" height="8" fill="#fff" stroke="#2040b0" stroke-width="1.6"/>
<circle cx="8" cy="346" r="3" fill="#30a030"/><circle cx="21" cy="349" r="3" fill="#30a030"/>
<path d="M8,349 v2 h8" fill="none" stroke="#c02020" stroke-width="1.4"/>
<path d="M4,358 h19" stroke="#cfd2d8" stroke-width="1"/>
<rect x="6.5" y="364.5" width="12" height="12" rx="1.5" fill="#f0d040" stroke="#705800" stroke-width="1"/>
<circle cx="13" cy="371" r="4" fill="#30a030"/><rect x="15" y="373" width="7" height="7" fill="#9a9cc0" stroke="#555" stroke-width=".6"/>
<rect x="6.5" y="386.5" width="12" height="12" rx="1.5" fill="#f0d040" stroke="#705800" stroke-width="1"/>
<circle cx="13" cy="393" r="4" fill="#30a030"/><rect x="15" y="395" width="7" height="7" fill="#b0a0c8" stroke="#555" stroke-width=".6"/>
</svg>
<!-- collapse handle -->
<svg class="a" style="left:224px;top:360px;z-index:5" width="10" height="28" viewBox="224 360 10 28">
<path d="M225,360 v2 h7 v24 h-7 v2" fill="#e8eaef" stroke="#50545c" stroke-width="1"/>
<path d="M231,366 l-3,2 l3,2 z M231,373 l-3,2 l3,2 z M231,380 l-3,2 l3,2 z" fill="#50545c"/>
</svg>

<!-- VIEWPORTS -->

<svg class="a" style="left:224px;top:96px" width="736" height="554" viewBox="224 96 736 554">
<defs>
<linearGradient id="fband" x1="0" x2="1" y1="0" y2="0"><stop offset="0" stop-color="#404040"/><stop offset=".5" stop-color="#555"/><stop offset="1" stop-color="#3c3c3c"/></linearGradient>
<linearGradient id="sup" x1="0" x2="1"><stop offset="0" stop-color="#5c5c5c"/><stop offset=".12" stop-color="#6a6a6a"/><stop offset=".88" stop-color="#6a6a6a"/><stop offset="1" stop-color="#5c5c5c"/></linearGradient>
<linearGradient id="col" x1="0" x2="1"><stop offset="0" stop-color="#5a5a5a"/><stop offset=".5" stop-color="#727272"/><stop offset="1" stop-color="#5e5e5e"/></linearGradient>
<linearGradient id="cyl" x1="0" x2="0" y1="0" y2="1"><stop offset="0" stop-color="#5a5a5a"/><stop offset=".4" stop-color="#6c6c6c"/><stop offset="1" stop-color="#4e4e4e"/></linearGradient>
</defs>
<rect x="226" y="97" width="734" height="553" fill="#c5c7d3"/>
<rect x="594" y="97" width="366" height="553" fill="#c6c8d4"/>
<!-- frame lines -->
<rect x="224.8" y="97" width="2.4" height="553" fill="#5c606a"/>
<rect x="227.2" y="97" width="3" height="553" fill="#c4c9d1"/>
<rect x="590.6" y="97" width="1.6" height="553" fill="#a6aab4"/>
<rect x="592.5" y="97" width="1.6" height="553" fill="#4e525a"/>
<rect x="226" y="373.6" width="734" height="1.2" fill="#7e828c"/>
<rect x="226" y="374.8" width="734" height="1.6" fill="#e6e8ec"/>
<rect x="226" y="376.4" width="734" height="1.6" fill="#50545c"/>
<rect x="226" y="96" width="734" height="1.6" fill="#666a76"/>
<rect x="226" y="649" width="734" height="1.5" fill="#5a5e66"/>

<!-- ===== FRONTAL ===== -->
<path d="M277,133 H536 V173 H487 A15,15 0 0 0 472,188 V267 A15,15 0 0 0 487,282 H536 V339 H277 V282 H327 A15,15 0 0 0 342,267 V188 A15,15 0 0 0 327,173 H277 Z" fill="#575758" stroke="#0c0c0c" stroke-width="1.9"/>
<rect x="284" y="134" width="24" height="38" fill="url(#fband)"/>
<rect x="505" y="134" width="25" height="38" fill="url(#fband)"/>
<rect x="360" y="133.5" width="93" height="40" fill="#474747" stroke="#262626" stroke-width="1"/>
<rect x="349" y="291" width="116" height="47.5" fill="#4a4a4a" stroke="#2a2a2a" stroke-width="1"/>
<path d="M399.5,133 V182 M414.5,133 V182" stroke="#111" stroke-width="1.4"/>
<rect x="400" y="134" width="14" height="46" fill="#585858"/>
<circle cx="407" cy="142" r="5.5" fill="#d4d7de" stroke="#111" stroke-width="1.4"/>
<circle cx="407" cy="227" r="52.5" fill="#545454" stroke="#111" stroke-width="1.5"/>
<circle cx="407" cy="227" r="48" fill="none" stroke="#111" stroke-width="1.4"/>
<circle cx="407" cy="227" r="36.5" fill="#d0d3da" stroke="#0c0c0c" stroke-width="1.8"/>
<path d="M399,279 V300 A8,8 0 0 0 415,300 V279" fill="#575757" stroke="#111" stroke-width="1.4"/>
<g fill="#d2d5dc" stroke="#0c0c0c" stroke-width="1.7">
<circle cx="333" cy="154" r="16.5" fill="#555"/><circle cx="333" cy="154" r="10.5"/>
<circle cx="480" cy="154" r="16.5" fill="#555"/><circle cx="480" cy="154" r="10.5"/>
<circle cx="333" cy="310" r="16.5" fill="#555"/><circle cx="333" cy="310" r="10.5"/>
<circle cx="480" cy="310" r="16.5" fill="#555"/><circle cx="480" cy="310" r="10.5"/>
</g>
<path d="M281,321 L294,338 M535,321 L521,338" stroke="#111" stroke-width="1.4"/>
<!-- triad frontal -->
<path d="M264,318 V297" stroke="#2a8a2a" stroke-width="2.4"/>
<path d="M260.5,299 L264,291 L267.5,299 Z" fill="#2a8a2a"/>
<path d="M265,319 H286" stroke="#d83030" stroke-width="2.4"/>
<path d="M284,315.5 L292,319 L284,322.5 Z" fill="#c02020"/>
<circle cx="264" cy="319" r="4" fill="#1820a0"/>
<text x="260" y="288" font-size="9" fill="#3a9a3a" font-family="Liberation Sans">Y</text>
<text x="292" y="322.5" font-size="9" fill="#e04040" font-family="Liberation Sans">X</text>
<!-- label -->
<rect x="238" y="361" width="14" height="7" rx="3.5" fill="#b4b6bb" stroke="#9a9ca2" stroke-width=".8"/>
<text x="256" y="369" font-size="11.5" font-weight="bold" fill="#2e3664" letter-spacing=".55" font-family="Liberation Sans">*Frontal</text>

<!-- ===== SUPERIOR ===== -->
<rect x="277" y="448.5" width="259" height="132.5" fill="url(#sup)" stroke="#0c0c0c" stroke-width="1.9"/>
<rect x="322" y="449.5" width="22.5" height="39" fill="url(#col)" stroke="#3a3a3a" stroke-width=".8"/>
<rect x="316.5" y="488.5" width="33.5" height="92" fill="url(#col)" stroke="#3a3a3a" stroke-width=".8"/>
<rect x="468" y="449.5" width="23" height="39" fill="url(#col)" stroke="#3a3a3a" stroke-width=".8"/>
<rect x="464" y="488.5" width="34" height="92" fill="url(#col)" stroke="#3a3a3a" stroke-width=".8"/>
<rect x="370" y="449.5" width="74" height="51" fill="url(#col)" stroke="#3a3a3a" stroke-width=".8"/>
<rect x="400" y="449.5" width="14" height="21" fill="#6e6e6e" stroke="#3a3a3a" stroke-width=".8"/>

<rect x="359.5" y="500" width="95" height="28" fill="url(#col)" stroke="#333" stroke-width=".8"/>
<path d="M353,528 H461 V580.5 H353 Z" fill="url(#col)" stroke="#333" stroke-width=".8"/>
<circle cx="407" cy="518" r="56.5" fill="none" stroke="#3a3a3a" stroke-width="1.4"/>
<circle cx="407" cy="514.5" r="46" fill="none" stroke="#111" stroke-width="1.8"/>
<path d="M400,572 V514 A7,7 0 0 1 414,514 V572 Z" fill="#dde0e7" stroke="#111" stroke-width="1.4"/>
<g fill="#737373" stroke="#111" stroke-width="1.7">
<circle cx="296" cy="468.5" r="12"/><circle cx="517.5" cy="468.5" r="12"/>
<circle cx="296" cy="561" r="12"/><circle cx="517.5" cy="561" r="12"/>
</g>
<rect x="278" y="574" width="5" height="6.5" fill="none" stroke="#222" stroke-width=".8"/>
<rect x="530" y="574" width="5" height="6.5" fill="none" stroke="#222" stroke-width=".8"/>
<rect x="277" y="448.5" width="259" height="132.5" fill="none" stroke="#0c0c0c" stroke-width="1.9"/>
<!-- triad superior -->
<path d="M264,597 V618" stroke="#2838c8" stroke-width="2.4"/>
<path d="M260.5,616 L264,624 L267.5,616 Z" fill="#2030c0"/>
<path d="M265,596 H286" stroke="#d83030" stroke-width="2.4"/>
<path d="M284,592.5 L292,596 L284,599.5 Z" fill="#c02020"/>
<circle cx="264" cy="596" r="4" fill="#1a7a1a"/>
<text x="292" y="599.5" font-size="9" fill="#e04040" font-family="Liberation Sans">X</text>
<text x="260.5" y="633" font-size="9" font-style="italic" fill="#2030c0" font-family="Liberation Sans">Z</text>
<rect x="238" y="638" width="14" height="7" rx="3.5" fill="#b4b6bb" stroke="#9a9ca2" stroke-width=".8"/>
<text x="256" y="646" font-size="11.5" font-weight="bold" fill="#2e3664" letter-spacing=".55" font-family="Liberation Sans">*Superior</text>

<!-- ===== DIREITA ===== -->
<rect x="721.5" y="467.5" width="110" height="169.5" fill="#5a5a5a"/>
<rect x="722" y="468" width="109" height="32" fill="url(#cyl)"/>
<rect x="749" y="471" width="49.5" height="27" fill="#5e5e5e" stroke="#2a2a2a" stroke-width="1"/>
<path d="M728,469 V499 M805,469 V499 M815,469 V499 M824.5,469 V499" stroke="#3a3a3a" stroke-width=".9"/>
<rect x="825" y="469" width="6" height="30" fill="#6e6e6e"/>
<rect x="722" y="500" width="109" height="15.5" fill="#4c4c4c"/>
<rect x="789" y="501" width="42" height="14" fill="#7a7a7c"/>
<rect x="766" y="505" width="23" height="10" fill="#585858"/>
<rect x="776" y="500" width="7" height="6" fill="#6a6a6a" stroke="#333" stroke-width=".8"/>
<rect x="722" y="515.5" width="109" height="61" fill="url(#cyl)"/>
<rect x="722" y="576.5" width="109" height="14.5" fill="#767678"/>
<path d="M722,580 H797 M722,584 H797 M722,587.5 H797" stroke="#7a7590" stroke-width="1"/>
<path d="M722,585.5 H766" stroke="#4a3a7a" stroke-width="1.2"/>
<rect x="722" y="591.5" width="109" height="45" fill="#5a5a5a"/>
<rect x="797" y="591.5" width="34" height="8" fill="#707072"/>
<rect x="728" y="599.2" width="70.3" height="29" fill="#4e4e4e" stroke="#262626" stroke-width="1.1"/>
<rect x="798.3" y="599.2" width="26.4" height="29" fill="#585858" stroke="#333" stroke-width=".9"/>
<path d="M798,604.7 H825 M798,623.5 H825" stroke="#3a3a3a" stroke-width=".8"/>
<rect x="721.5" y="619.3" width="7" height="17.5" fill="#666" stroke="#222" stroke-width="1"/>
<ellipse cx="776" cy="613.7" rx="8" ry="4.5" fill="none" stroke="#222" stroke-width="1.1"/>
<path d="M722,500 H831 M722,515.5 H831 M722,576.3 H831 M797,591.5 H831 M722,628.5 H728 M825,628.5 H831" stroke="#141414" stroke-width="1.5"/>
<path d="M765.8,500 V585 M788.6,500 V585 M777.5,585 V599" stroke="#1a1a1a" stroke-width="1.3"/>
<path d="M722,590.8 H797" stroke="#e09030" stroke-width="2"/>
<rect x="721.5" y="467.5" width="110" height="169.5" fill="none" stroke="#0c0c0c" stroke-width="1.9"/>
<!-- triad direita -->
<path d="M630,596 V576" stroke="#2a8a2a" stroke-width="2.4"/>
<path d="M626.5,578 L630,570 L633.5,578 Z" fill="#2a8a2a"/>
<path d="M629,596 H608" stroke="#2838c8" stroke-width="2.4"/>
<path d="M610,592.5 L602,596 L610,599.5 Z" fill="#2030c0"/>
<circle cx="630" cy="596" r="4" fill="#c01818"/>
<text x="626" y="568" font-size="9" fill="#3a9a3a" font-family="Liberation Sans">Y</text>
<text x="595" y="599.5" font-size="9" fill="#2030c0" font-family="Liberation Sans">Z</text>
<rect x="608" y="638" width="14" height="7" rx="3.5" fill="#b4b6bb" stroke="#9a9ca2" stroke-width=".8"/>
<text x="626" y="646" font-size="11.5" font-weight="bold" fill="#2e3664" letter-spacing=".55" font-family="Liberation Sans">*Direita</text>

<!-- ===== ISOMETRIC ===== -->
<g id="iso"><g opacity="0.62">
<polygon points="771.0,144.0 885.1,208.4 826.6,243.7 712.5,179.3" fill="#3c3c3e" stroke="none" stroke-width="0" />
<polygon points="885.1,208.4 885.1,228.4 826.6,263.7 826.6,243.7" fill="#3c3c3e" stroke="none" stroke-width="0" />
<polygon points="885.1,228.4 863.5,216.2 805.1,251.5 826.6,263.7" fill="#3c3c3e" stroke="none" stroke-width="0" />
<polygon points="863.5,216.2 862.2,215.6 803.8,250.9 805.1,251.5" fill="#3c3c3e" stroke="none" stroke-width="0" />
<polygon points="862.2,215.6 861.0,215.3 802.5,250.6 803.8,250.9" fill="#3c3c3e" stroke="none" stroke-width="0" />
<polygon points="861.0,215.3 859.8,215.4 801.4,250.7 802.5,250.6" fill="#3c3c3e" stroke="none" stroke-width="0" />
<polygon points="859.8,215.4 858.8,215.7 800.4,251.1 801.4,250.7" fill="#3c3c3e" stroke="none" stroke-width="0" />
<polygon points="858.8,215.7 858.0,216.4 799.6,251.7 800.4,251.1" fill="#3c3c3e" stroke="none" stroke-width="0" />
<polygon points="858.0,216.4 857.4,217.4 798.9,252.7 799.6,251.7" fill="#3c3c3e" stroke="none" stroke-width="0" />
<polygon points="857.4,217.4 857.0,218.6 798.6,253.9 798.9,252.7" fill="#3c3c3e" stroke="none" stroke-width="0" />
<polygon points="857.0,218.6 856.9,220.0 798.4,255.3 798.6,253.9" fill="#3c3c3e" stroke="none" stroke-width="0" />
<polygon points="856.9,220.0 856.9,259.5 798.4,294.8 798.4,255.3" fill="#3c3c3e" stroke="none" stroke-width="0" />
<polygon points="856.9,259.5 857.0,261.0 798.6,296.3 798.4,294.8" fill="#3c3c3e" stroke="none" stroke-width="0" />
<polygon points="857.0,261.0 857.4,262.6 798.9,297.9 798.6,296.3" fill="#3c3c3e" stroke="none" stroke-width="0" />
<polygon points="857.4,262.6 858.0,264.3 799.6,299.6 798.9,297.9" fill="#3c3c3e" stroke="none" stroke-width="0" />
<polygon points="858.0,264.3 858.8,265.9 800.4,301.2 799.6,299.6" fill="#3c3c3e" stroke="none" stroke-width="0" />
<polygon points="858.8,265.9 859.8,267.4 801.4,302.7 800.4,301.2" fill="#3c3c3e" stroke="none" stroke-width="0" />
<polygon points="859.8,267.4 861.0,268.7 802.5,304.0 801.4,302.7" fill="#3c3c3e" stroke="none" stroke-width="0" />
<polygon points="861.0,268.7 862.2,269.8 803.8,305.1 802.5,304.0" fill="#3c3c3e" stroke="none" stroke-width="0" />
<polygon points="862.2,269.8 863.5,270.7 805.1,306.0 803.8,305.1" fill="#3c3c3e" stroke="none" stroke-width="0" />
<polygon points="863.5,270.7 885.1,282.9 826.6,318.2 805.1,306.0" fill="#3c3c3e" stroke="none" stroke-width="0" />
<polygon points="885.1,282.9 885.1,302.4 826.6,337.7 826.6,318.2" fill="#3c3c3e" stroke="none" stroke-width="0" />
<polygon points="885.1,302.4 877.6,307.1 819.1,342.4 826.6,337.7" fill="#3c3c3e" stroke="none" stroke-width="0" />
<polygon points="877.6,307.1 778.5,251.2 720.0,286.5 819.1,342.4" fill="#3c3c3e" stroke="none" stroke-width="0" />
<polygon points="778.5,251.2 771.0,238.0 712.5,273.3 720.0,286.5" fill="#3c3c3e" stroke="none" stroke-width="0" />
<polygon points="771.0,238.0 771.0,218.5 712.5,253.8 712.5,273.3" fill="#3c3c3e" stroke="none" stroke-width="0" />
<polygon points="771.0,218.5 793.0,230.9 734.6,266.2 712.5,253.8" fill="#3c3c3e" stroke="none" stroke-width="0" />
<polygon points="793.0,230.9 794.3,231.5 735.9,266.8 734.6,266.2" fill="#3c3c3e" stroke="none" stroke-width="0" />
<polygon points="794.3,231.5 795.6,231.8 737.1,267.1 735.9,266.8" fill="#3c3c3e" stroke="none" stroke-width="0" />
<polygon points="795.6,231.8 796.7,231.7 738.2,267.0 737.1,267.1" fill="#3c3c3e" stroke="none" stroke-width="0" />
<polygon points="796.7,231.7 797.7,231.4 739.2,266.7 738.2,267.0" fill="#3c3c3e" stroke="none" stroke-width="0" />
<polygon points="797.7,231.4 798.5,230.7 740.1,266.0 739.2,266.7" fill="#3c3c3e" stroke="none" stroke-width="0" />
<polygon points="798.5,230.7 799.1,229.7 740.7,265.1 740.1,266.0" fill="#3c3c3e" stroke="none" stroke-width="0" />
<polygon points="799.1,229.7 799.5,228.5 741.1,263.9 740.7,265.1" fill="#3c3c3e" stroke="none" stroke-width="0" />
<polygon points="799.5,228.5 799.6,227.2 741.2,262.5 741.1,263.9" fill="#3c3c3e" stroke="none" stroke-width="0" />
<polygon points="799.6,227.2 799.6,187.7 741.2,223.0 741.2,262.5" fill="#3c3c3e" stroke="none" stroke-width="0" />
<polygon points="799.6,187.7 799.5,186.1 741.1,221.4 741.2,223.0" fill="#3c3c3e" stroke="none" stroke-width="0" />
<polygon points="799.5,186.1 799.1,184.5 740.7,219.8 741.1,221.4" fill="#3c3c3e" stroke="none" stroke-width="0" />
<polygon points="799.1,184.5 798.5,182.9 740.1,218.2 740.7,219.8" fill="#3c3c3e" stroke="none" stroke-width="0" />
<polygon points="798.5,182.9 797.7,181.3 739.2,216.6 740.1,218.2" fill="#3c3c3e" stroke="none" stroke-width="0" />
<polygon points="797.7,181.3 796.7,179.8 738.2,215.1 739.2,216.6" fill="#3c3c3e" stroke="none" stroke-width="0" />
<polygon points="796.7,179.8 795.6,178.4 737.1,213.7 738.2,215.1" fill="#3c3c3e" stroke="none" stroke-width="0" />
<polygon points="795.6,178.4 794.3,177.3 735.9,212.6 737.1,213.7" fill="#3c3c3e" stroke="none" stroke-width="0" />
<polygon points="794.3,177.3 793.0,176.4 734.6,211.7 735.9,212.6" fill="#3c3c3e" stroke="none" stroke-width="0" />
<polygon points="793.0,176.4 771.0,164.0 712.5,199.3 734.6,211.7" fill="#3c3c3e" stroke="none" stroke-width="0" />
<polygon points="771.0,164.0 771.0,144.0 712.5,179.3 712.5,199.3" fill="#3c3c3e" stroke="none" stroke-width="0" />
<polygon points="712.5,179.3 826.6,243.7 826.6,263.7 805.1,251.5 803.8,250.9 802.5,250.6 801.4,250.7 800.4,251.1 799.6,251.7 798.9,252.7 798.6,253.9 798.4,255.3 798.4,294.8 798.6,296.3 798.9,297.9 799.6,299.6 800.4,301.2 801.4,302.7 802.5,304.0 803.8,305.1 805.1,306.0 826.6,318.2 826.6,337.7 819.1,342.4 720.0,286.5 712.5,273.3 712.5,253.8 734.6,266.2 735.9,266.8 737.1,267.1 738.2,267.0 739.2,266.7 740.1,266.0 740.7,265.1 741.1,263.9 741.2,262.5 741.2,223.0 741.1,221.4 740.7,219.8 740.1,218.2 739.2,216.6 738.2,215.1 737.1,213.7 735.9,212.6 734.6,211.7 712.5,199.3" fill="#3c3c3e" stroke="none" stroke-width="0" />
<polygon points="771.0,144.0 885.1,208.4 885.1,228.4 863.5,216.2 862.2,215.6 861.0,215.3 859.8,215.4 858.8,215.7 858.0,216.4 857.4,217.4 857.0,218.6 856.9,220.0 856.9,259.5 857.0,261.0 857.4,262.6 858.0,264.3 858.8,265.9 859.8,267.4 861.0,268.7 862.2,269.8 863.5,270.7 885.1,282.9 885.1,302.4 877.6,307.1 778.5,251.2 771.0,238.0 771.0,218.5 793.0,230.9 794.3,231.5 795.6,231.8 796.7,231.7 797.7,231.4 798.5,230.7 799.1,229.7 799.5,228.5 799.6,227.2 799.6,187.7 799.5,186.1 799.1,184.5 798.5,182.9 797.7,181.3 796.7,179.8 795.6,178.4 794.3,177.3 793.0,176.4 771.0,164.0" fill="#3c3c3e" stroke="none" stroke-width="0" />
</g>
<circle r="36.5" transform="matrix(0.4405,0.2485,0,-0.5,769.81,258.62)" fill="rgba(200,203,211,0.18)" stroke="#151515" stroke-width="1.4850000000000003" vector-effect="non-scaling-stroke"/>
<circle r="36.5" transform="matrix(0.4405,0.2485,0,-0.5,828.26,223.31)" fill="none" stroke="#2a2a2a" stroke-width="1.35" vector-effect="non-scaling-stroke"/>
<circle r="52.5" transform="matrix(0.4405,0.2485,0,-0.5,769.81,258.62)" fill="none" stroke="#151515" stroke-width="1.4850000000000003" vector-effect="non-scaling-stroke"/>
<circle r="52.5" transform="matrix(0.4405,0.2485,0,-0.5,779.92,252.51)" fill="none" stroke="#303030" stroke-width="1.35" vector-effect="non-scaling-stroke"/>
<polyline points="816.7,204.1 758.3,239.4" fill="none" stroke="#262626" stroke-width="1.35" stroke-linejoin="round" />
<polyline points="839.8,242.5 781.3,277.8" fill="none" stroke="#262626" stroke-width="1.35" stroke-linejoin="round" />
<circle r="10.5" transform="matrix(0.4405,0.2485,0,-0.5,737.21,203.73)" fill="rgba(210,212,218,0.35)" stroke="#151515" stroke-width="1.4850000000000003" vector-effect="non-scaling-stroke"/>
<circle r="16.5" transform="matrix(0.4405,0.2485,0,-0.5,737.21,203.73)" fill="none" stroke="#151515" stroke-width="1.35" vector-effect="non-scaling-stroke"/>
<circle r="10.5" transform="matrix(0.4405,0.2485,0,-0.5,795.67,168.42)" fill="none" stroke="#333" stroke-width="1.215" vector-effect="non-scaling-stroke"/>
<circle r="10.5" transform="matrix(0.4405,0.2485,0,-0.5,801.97,240.26)" fill="rgba(210,212,218,0.35)" stroke="#151515" stroke-width="1.4850000000000003" vector-effect="non-scaling-stroke"/>
<circle r="16.5" transform="matrix(0.4405,0.2485,0,-0.5,801.97,240.26)" fill="none" stroke="#151515" stroke-width="1.35" vector-effect="non-scaling-stroke"/>
<circle r="10.5" transform="matrix(0.4405,0.2485,0,-0.5,860.42,204.95)" fill="none" stroke="#333" stroke-width="1.215" vector-effect="non-scaling-stroke"/>
<circle r="10.5" transform="matrix(0.4405,0.2485,0,-0.5,737.21,281.73)" fill="rgba(210,212,218,0.35)" stroke="#151515" stroke-width="1.4850000000000003" vector-effect="non-scaling-stroke"/>
<circle r="16.5" transform="matrix(0.4405,0.2485,0,-0.5,737.21,281.73)" fill="none" stroke="#151515" stroke-width="1.35" vector-effect="non-scaling-stroke"/>
<circle r="10.5" transform="matrix(0.4405,0.2485,0,-0.5,795.67,246.42)" fill="none" stroke="#333" stroke-width="1.215" vector-effect="non-scaling-stroke"/>
<circle r="10.5" transform="matrix(0.4405,0.2485,0,-0.5,801.97,318.26)" fill="rgba(210,212,218,0.35)" stroke="#151515" stroke-width="1.4850000000000003" vector-effect="non-scaling-stroke"/>
<circle r="16.5" transform="matrix(0.4405,0.2485,0,-0.5,801.97,318.26)" fill="none" stroke="#151515" stroke-width="1.35" vector-effect="non-scaling-stroke"/>
<circle r="10.5" transform="matrix(0.4405,0.2485,0,-0.5,860.42,282.95)" fill="none" stroke="#333" stroke-width="1.215" vector-effect="non-scaling-stroke"/>
<circle r="12" transform="matrix(0.4405,0.2485,-0.4395,0.2655,770.58,154.03)" fill="rgba(200,200,205,0.15)" stroke="#151515" stroke-width="1.4850000000000003" vector-effect="non-scaling-stroke"/>
<circle r="12" transform="matrix(0.4405,0.2485,-0.4395,0.2655,770.58,174.03)" fill="none" stroke="#333" stroke-width="1.215" vector-effect="non-scaling-stroke"/>
<circle r="12" transform="matrix(0.4405,0.2485,-0.4395,0.2655,770.58,228.53)" fill="none" stroke="#333" stroke-width="1.215" vector-effect="non-scaling-stroke"/>
<circle r="12" transform="matrix(0.4405,0.2485,-0.4395,0.2655,770.58,257.03)" fill="none" stroke="#333" stroke-width="1.215" vector-effect="non-scaling-stroke"/>
<polyline points="778.0,153.9 778.0,173.9" fill="none" stroke="#333" stroke-width="1.215" stroke-linejoin="round" />
<polyline points="778.0,228.4 778.0,256.9" fill="none" stroke="#333" stroke-width="1.215" stroke-linejoin="round" />
<polyline points="763.1,154.2 763.1,174.2" fill="none" stroke="#333" stroke-width="1.215" stroke-linejoin="round" />
<polyline points="763.1,228.7 763.1,257.2" fill="none" stroke="#333" stroke-width="1.215" stroke-linejoin="round" />
<circle r="12" transform="matrix(0.4405,0.2485,-0.4395,0.2655,868.15,209.07)" fill="rgba(200,200,205,0.15)" stroke="#151515" stroke-width="1.4850000000000003" vector-effect="non-scaling-stroke"/>
<circle r="12" transform="matrix(0.4405,0.2485,-0.4395,0.2655,868.15,229.07)" fill="none" stroke="#333" stroke-width="1.215" vector-effect="non-scaling-stroke"/>
<circle r="12" transform="matrix(0.4405,0.2485,-0.4395,0.2655,868.15,283.57)" fill="none" stroke="#333" stroke-width="1.215" vector-effect="non-scaling-stroke"/>
<circle r="12" transform="matrix(0.4405,0.2485,-0.4395,0.2655,868.15,312.07)" fill="none" stroke="#333" stroke-width="1.215" vector-effect="non-scaling-stroke"/>
<polyline points="875.6,208.9 875.6,228.9" fill="none" stroke="#333" stroke-width="1.215" stroke-linejoin="round" />
<polyline points="875.6,283.4 875.6,311.9" fill="none" stroke="#333" stroke-width="1.215" stroke-linejoin="round" />
<polyline points="860.7,209.2 860.7,229.2" fill="none" stroke="#333" stroke-width="1.215" stroke-linejoin="round" />
<polyline points="860.7,283.7 860.7,312.2" fill="none" stroke="#333" stroke-width="1.215" stroke-linejoin="round" />
<circle r="12" transform="matrix(0.4405,0.2485,-0.4395,0.2655,729.93,178.59)" fill="rgba(200,200,205,0.15)" stroke="#151515" stroke-width="1.4850000000000003" vector-effect="non-scaling-stroke"/>
<circle r="12" transform="matrix(0.4405,0.2485,-0.4395,0.2655,729.93,198.59)" fill="none" stroke="#333" stroke-width="1.215" vector-effect="non-scaling-stroke"/>
<circle r="12" transform="matrix(0.4405,0.2485,-0.4395,0.2655,729.93,253.09)" fill="none" stroke="#333" stroke-width="1.215" vector-effect="non-scaling-stroke"/>
<circle r="12" transform="matrix(0.4405,0.2485,-0.4395,0.2655,729.93,281.59)" fill="none" stroke="#333" stroke-width="1.215" vector-effect="non-scaling-stroke"/>
<polyline points="737.4,178.5 737.4,198.5" fill="none" stroke="#333" stroke-width="1.215" stroke-linejoin="round" />
<polyline points="737.4,253.0 737.4,281.5" fill="none" stroke="#333" stroke-width="1.215" stroke-linejoin="round" />
<polyline points="722.5,178.7 722.5,198.7" fill="none" stroke="#333" stroke-width="1.215" stroke-linejoin="round" />
<polyline points="722.5,253.2 722.5,281.7" fill="none" stroke="#333" stroke-width="1.215" stroke-linejoin="round" />
<circle r="12" transform="matrix(0.4405,0.2485,-0.4395,0.2655,827.50,233.63)" fill="rgba(200,200,205,0.15)" stroke="#151515" stroke-width="1.4850000000000003" vector-effect="non-scaling-stroke"/>
<circle r="12" transform="matrix(0.4405,0.2485,-0.4395,0.2655,827.50,253.63)" fill="none" stroke="#333" stroke-width="1.215" vector-effect="non-scaling-stroke"/>
<circle r="12" transform="matrix(0.4405,0.2485,-0.4395,0.2655,827.50,308.13)" fill="none" stroke="#333" stroke-width="1.215" vector-effect="non-scaling-stroke"/>
<circle r="12" transform="matrix(0.4405,0.2485,-0.4395,0.2655,827.50,336.63)" fill="none" stroke="#333" stroke-width="1.215" vector-effect="non-scaling-stroke"/>
<polyline points="835.0,233.5 835.0,253.5" fill="none" stroke="#333" stroke-width="1.215" stroke-linejoin="round" />
<polyline points="835.0,308.0 835.0,336.5" fill="none" stroke="#333" stroke-width="1.215" stroke-linejoin="round" />
<polyline points="820.0,233.8 820.0,253.8" fill="none" stroke="#333" stroke-width="1.215" stroke-linejoin="round" />
<polyline points="820.0,308.3 820.0,336.8" fill="none" stroke="#333" stroke-width="1.215" stroke-linejoin="round" />
<circle r="46" transform="matrix(0.4405,0.2485,-0.4395,0.2655,799.26,193.83)" fill="none" stroke="#151515" stroke-width="1.7550000000000001" vector-effect="non-scaling-stroke"/>
<circle r="46" transform="matrix(0.4405,0.2485,-0.4395,0.2655,799.26,213.83)" fill="none" stroke="#151515" stroke-width="1.62" vector-effect="non-scaling-stroke"/>
<polyline points="827.9,193.3 827.9,267.8" fill="none" stroke="#222" stroke-width="1.4850000000000003" stroke-linejoin="round" />
<polyline points="770.6,194.4 770.6,268.9" fill="none" stroke="#222" stroke-width="1.4850000000000003" stroke-linejoin="round" />
<circle r="46" transform="matrix(0.4405,0.2485,-0.4395,0.2655,799.26,268.33)" fill="none" stroke="#2a2a2a" stroke-width="1.35" vector-effect="non-scaling-stroke"/>
<circle r="9" transform="matrix(-0.4395,0.2655,0,-0.5,841.52,232.32)" fill="none" stroke="#151515" stroke-width="1.4850000000000003" vector-effect="non-scaling-stroke"/>
<circle r="9" transform="matrix(-0.4395,0.2655,0,-0.5,867.51,246.98)" fill="none" stroke="#333" stroke-width="1.215" vector-effect="non-scaling-stroke"/>
<circle r="9" transform="matrix(-0.4395,0.2655,0,-0.5,817.35,246.92)" fill="none" stroke="#151515" stroke-width="1.4850000000000003" vector-effect="non-scaling-stroke"/>
<circle r="9" transform="matrix(-0.4395,0.2655,0,-0.5,843.34,261.58)" fill="none" stroke="#333" stroke-width="1.215" vector-effect="non-scaling-stroke"/>
<g transform="matrix(0.4405,0.2485,0,0.5,590.53,43.98)" fill="none" stroke="#1e1e1e" stroke-width="1.2" vector-effect="non-scaling-stroke">
<path vector-effect="non-scaling-stroke" d="M360,133.5 V173.5 H453 V133.5 M399.5,133 V178 M414.5,133 V178 M349,339 V291 H465 V339 M399,279 V300 A8,8 0 0 0 415,300 V279 M281,321 L294,338 M535,321 L521,338"/>
</g>
<polygon points="712.5,179.3 826.6,243.7 826.6,263.7 805.1,251.5 803.8,250.9 802.5,250.6 801.4,250.7 800.4,251.1 799.6,251.7 798.9,252.7 798.6,253.9 798.4,255.3 798.4,294.8 798.6,296.3 798.9,297.9 799.6,299.6 800.4,301.2 801.4,302.7 802.5,304.0 803.8,305.1 805.1,306.0 826.6,318.2 826.6,337.7 819.1,342.4 720.0,286.5 712.5,273.3 712.5,253.8 734.6,266.2 735.9,266.8 737.1,267.1 738.2,267.0 739.2,266.7 740.1,266.0 740.7,265.1 741.1,263.9 741.2,262.5 741.2,223.0 741.1,221.4 740.7,219.8 740.1,218.2 739.2,216.6 738.2,215.1 737.1,213.7 735.9,212.6 734.6,211.7 712.5,199.3" fill="none" stroke="#151515" stroke-width="1.89" stroke-linejoin="round" />
<polygon points="771.0,144.0 885.1,208.4 885.1,228.4 863.5,216.2 862.2,215.6 861.0,215.3 859.8,215.4 858.8,215.7 858.0,216.4 857.4,217.4 857.0,218.6 856.9,220.0 856.9,259.5 857.0,261.0 857.4,262.6 858.0,264.3 858.8,265.9 859.8,267.4 861.0,268.7 862.2,269.8 863.5,270.7 885.1,282.9 885.1,302.4 877.6,307.1 778.5,251.2 771.0,238.0 771.0,218.5 793.0,230.9 794.3,231.5 795.6,231.8 796.7,231.7 797.7,231.4 798.5,230.7 799.1,229.7 799.5,228.5 799.6,227.2 799.6,187.7 799.5,186.1 799.1,184.5 798.5,182.9 797.7,181.3 796.7,179.8 795.6,178.4 794.3,177.3 793.0,176.4 771.0,164.0" fill="none" stroke="#262626" stroke-width="1.35" stroke-linejoin="round" />
<polyline points="771.0,144.0 712.5,179.3" fill="none" stroke="#151515" stroke-width="1.35" stroke-linejoin="round" />
<polyline points="885.1,208.4 826.6,243.7" fill="none" stroke="#151515" stroke-width="1.7550000000000001" stroke-linejoin="round" />
<polyline points="885.1,228.4 826.6,263.7" fill="none" stroke="#151515" stroke-width="1.7550000000000001" stroke-linejoin="round" />
<polyline points="885.1,282.9 826.6,318.2" fill="none" stroke="#151515" stroke-width="1.7550000000000001" stroke-linejoin="round" />
<polyline points="885.1,302.4 826.6,337.7" fill="none" stroke="#151515" stroke-width="1.7550000000000001" stroke-linejoin="round" />
<polyline points="877.6,307.1 819.1,342.4" fill="none" stroke="#151515" stroke-width="1.7550000000000001" stroke-linejoin="round" />
<polyline points="778.5,251.2 720.0,286.5" fill="none" stroke="#151515" stroke-width="1.7550000000000001" stroke-linejoin="round" />
<polyline points="771.0,238.0 712.5,273.3" fill="none" stroke="#151515" stroke-width="1.7550000000000001" stroke-linejoin="round" />
<polyline points="771.0,218.5 712.5,253.8" fill="none" stroke="#151515" stroke-width="1.7550000000000001" stroke-linejoin="round" />
<polyline points="771.0,164.0 712.5,199.3" fill="none" stroke="#151515" stroke-width="1.7550000000000001" stroke-linejoin="round" />
<polyline points="712.5,199.3 826.6,263.7" fill="none" stroke="#2a2a2a" stroke-width="1.215" stroke-linejoin="round" />
<polyline points="712.5,253.8 826.6,318.2" fill="none" stroke="#2a2a2a" stroke-width="1.215" stroke-linejoin="round" /></g>
<!-- dimension -->
<polyline points="827.6,242.3 845.9,253.1 934.6,201 917,190.8" fill="none" stroke="#2020d0" stroke-width="1.3"/>
<text x="0" y="0" font-size="12.5" font-weight="bold" fill="#2020d0" font-family="Liberation Sans" transform="translate(874,230) rotate(-30)">110</text>
<!-- iso triad -->
<path d="M630.4,319.6 V300" stroke="#2a8a2a" stroke-width="3"/>
<path d="M626,302 L630.4,293 L635,302 Z" fill="#2a8a2a"/>
<path d="M630.4,319.6 L646,328.5" stroke="#c82828" stroke-width="3"/>
<path d="M643,324 L652,331.5 L641,331 Z" fill="#c82828"/>
<path d="M630.4,319.6 L616,327.5" stroke="#2030c0" stroke-width="3"/>
<path d="M619,323 L610,330.5 L621,330.5 Z" fill="#2030c0"/>
<text x="626" y="293" font-size="8" fill="#3a9a3a" font-family="Liberation Sans">Y</text>
<text x="603" y="336" font-size="9" fill="#2030c0" font-family="Liberation Sans">Z</text>
<text x="651" y="336" font-size="8" fill="#e03030" font-family="Liberation Sans">X</text>


<!-- viewport window controls -->
<g stroke="#6a6e78" fill="#eef0f4" stroke-width="1">
<rect x="851.5" y="106.5" width="10" height="10"/><rect x="877.5" y="106.5" width="10" height="10"/>
</g>
<path d="M855,109 v5 M859,109 l-2,2.5 l2,2.5 M880,109 l2,2.5 l-2,2.5 M884,109 v5" stroke="#40444c" stroke-width="1" fill="none"/>
<rect x="895.5" y="112.5" width="10" height="3" fill="#e4e6ea" stroke="#6a6e78" stroke-width="1"/>
<rect x="918.5" y="106.5" width="9" height="7" fill="#e4e6ea" stroke="#6a6e78" stroke-width="1"/>
<rect x="914.5" y="109.5" width="9" height="7" fill="#e4e6ea" stroke="#6a6e78" stroke-width="1"/>
<path d="M934,107 l11,10 M945,107 l-11,10" stroke="#7a7e88" stroke-width="2.6"/>
<path d="M934,107 l11,10 M945,107 l-11,10" stroke="#eef0f4" stroke-width=".9"/>
<!-- heads-up toolbar -->
<rect x="711.5" y="124.5" width="19" height="20" rx="2" fill="#8a8c9c" stroke="#6a6c7c" stroke-width="1"/>
<g stroke-width="1.6">
<circle cx="653.5" cy="132.5" r="5.5" fill="#e4e6ea" stroke="#8a8e96"/><circle cx="653.5" cy="132.5" r="2" fill="#9a9ea6"/><path d="M657.5,137 l4,4" stroke="#5a7aa8" stroke-width="2.2"/>
<circle cx="675" cy="132.5" r="5.5" fill="#e4e6ea" stroke="#8a8e96"/><path d="M673,130 h4 v4" stroke="#9a9ea6" fill="none" stroke-width="1"/><path d="M679,137 l4,4" stroke="#7a90b0" stroke-width="2.2"/>
<path d="M693,128 l4,3 M701,127 l-3,5 M695,133 l8,8" stroke="#5a8ad0" stroke-width="2.2"/><circle cx="701" cy="140" r="2.5" fill="#c8e0f8" stroke="#5a8ad0" stroke-width="1"/>
</g>
<path d="M714,128 h14 v14 h-14 z" fill="#5a64a8"/>
<path d="M716.5,129 v12 M721,129 v12 M725.5,129 v12" stroke="#d8c830" stroke-width="1.8"/>
<path d="M719,129 v12 M723.5,129 v12" stroke="#3a60c0" stroke-width="1.2"/>
<path d="M737,131 l5,-3 h9 v10 l-5,3 h-9 z" fill="#90b8e8" stroke="#5a80b8" stroke-width="1"/>
<path d="M744,128 l3,-2 h5 v9 l-3,2 z" fill="#f0f2f8" stroke="#8a6a7a" stroke-width=".8"/>
<path d="M765,130 l4,-3 h11 v12 l-4,3 h-11 z" fill="#b8d4f0" stroke="#5a78a8" stroke-width="1"/>
<path d="M765,130 h11 v12 M776,130 l4,-3" fill="none" stroke="#5a78a8" stroke-width="1"/><path d="M776,130 l4,-3 v12 l-4,3 z" fill="#7aa4d8"/>
<path d="M796,134 a4,3 0 1 0 8,0 a4,3 0 1 0 -8,0 M806,134 a4,3 0 1 0 8,0 M803,130 l4,-3" fill="none" stroke="#9a9ea8" stroke-width="1.3"/>
<circle cx="835" cy="134" r="8" fill="#e03030"/><path d="M835,134 L827,134 A8,8 0 0 0 840,140.5 Z" fill="#30a030"/><path d="M835,134 L840,140.5 A8,8 0 0 0 843,134 Z" fill="#f0d020"/><path d="M835,134 L827,134 A8,8 0 0 1 835,126 Z" fill="#2060d0"/>
<circle cx="857" cy="131" r="6" fill="#e04040"/><path d="M851,131 a6,6 0 0 1 6,-6 v6z" fill="#30a040"/><path d="M857,131 h6 a6,6 0 0 1 -6,6z" fill="#3070d0"/>
<path d="M850,139 h14 v4 h-14 z" fill="#fff" stroke="#555" stroke-width=".6" stroke-dasharray="2,2"/>
<rect x="878" y="128" width="18" height="12" fill="#e8ecf0" stroke="#70747c" stroke-width="1"/><rect x="880" y="130" width="14" height="8" fill="#c0a060"/><path d="M884,140 v3 h6 v-3" fill="#888"/>
<path d="M753,134 h5 l-2.5,3 z M783,134 h5 l-2.5,3 z M816,134 h5 l-2.5,3 z M867,134 h5 l-2.5,3 z M899,134 h5 l-2.5,3 z" fill="#404048"/>
<!-- task pane -->
<g stroke="#8e94a4" stroke-width="1">
<rect x="936.5" y="154.5" width="26" height="21" rx="3" fill="#cdd2de"/>
<rect x="936.5" y="176.5" width="26" height="22" rx="3" fill="#cdd2de"/>
<rect x="936.5" y="199.5" width="26" height="21" rx="3" fill="#cdd2de"/>
<rect x="936.5" y="221.5" width="26" height="22" rx="3" fill="#cdd2de"/>
<rect x="936.5" y="244.5" width="26" height="22" rx="3" fill="#f2f4f8"/>
<rect x="936.5" y="267.5" width="26" height="22" rx="3" fill="#cdd2de"/>
</g>
<path d="M942,163 l7,-6 l7,6 v7 h-14 z" fill="#f0d060" stroke="#906820" stroke-width="1"/><rect x="947" y="165" width="4" height="5" fill="#fff" stroke="#906820" stroke-width=".6"/>
<rect x="942" y="186" width="4" height="9" fill="#30a030"/><rect x="946" y="183" width="4" height="12" fill="#e0c020"/><rect x="950" y="180" width="4" height="15" fill="#3060c0"/>
<path d="M942,206 h5 l2,2 h7 v8 h-14 z" fill="#f0c840" stroke="#a07820" stroke-width="1"/>
<rect x="942" y="225" width="14" height="10" fill="#fff" stroke="#5070a0" stroke-width="1"/><path d="M944,228 h4 M950,228 h4 M944,232 h4" stroke="#c0a030" stroke-width="1.6"/><path d="M942,239 h6 l-2,-2 M948,239 l-2,2" stroke="#2030b0" stroke-width="1.3" fill="none"/>
<circle cx="949" cy="255" r="7" fill="#e03030"/><path d="M949,255 L942,255 A7,7 0 0 0 953,260.5 Z" fill="#30a030"/><path d="M949,255 L953,260.5 A7,7 0 0 0 956,255 Z" fill="#f0d020"/><path d="M949,255 L942,255 A7,7 0 0 1 949,248 Z" fill="#2060d0"/>
<rect x="942" y="276" width="13" height="9" fill="#f0ece0" stroke="#807860" stroke-width="1"/><path d="M943,275 l6,-4 l6,3 l-6,3 z" fill="#c89840"/>

<text x="608" y="369" font-size="11.5" font-weight="bold" fill="#2e3664" letter-spacing=".55" font-family="Liberation Sans">*Isométrica</text>
</svg>


<div id="btabs" class="a"></div>
<div class="a" style="left:28px;top:650px;width:63px;height:14px;background:#bfc3cc;border-top:1px solid #70747c"></div>
<svg class="a" style="left:28px;top:650px" width="64" height="15" viewBox="28 650 64 15">
<g fill="#c8ccd4" stroke="#a0a4ac" stroke-width=".6"><rect x="29" y="651" width="14" height="13"/><rect x="44" y="651" width="14" height="13"/><rect x="59" y="651" width="15" height="13"/><rect x="75" y="651" width="15" height="13"/></g>
<path d="M34,654 v7 M39,654 l-4,3.5 l4,3.5 M52,654 l-4,3.5 l4,3.5 M64,654 l4,3.5 l-4,3.5 M80,654 l4,3.5 l-4,3.5 M85,654 v7" fill="none" stroke="#a8acb4" stroke-width="1.2"/>
</svg>
<div class="a" style="left:91px;top:650px;width:59px;height:15px;background:linear-gradient(#f0f1f4,#e2e4e9);border:1px solid #70747c;border-top:none;font-size:12px;font-weight:bold;color:#333;text-align:center;line-height:13px">Modelo</div>
<div class="a" style="left:150px;top:650px;width:142px;height:14px;background:linear-gradient(#c8c8d8,#b8bacb);border:1px solid #70747c;border-top:none;font-size:12px;color:#3a3a50;text-align:center;line-height:12px">Estudo de movimento 1</div>
<div class="a" style="left:292px;top:651px;width:668px;height:13px;background:#e4e5ea"></div>

<div id="status" class="a"></div>
<div class="t" style="left:3px;top:670px;font-size:12px;color:#2a2a30">SolidWorks Premium 2012</div>
<svg class="a" style="left:650px;top:666px" width="310" height="22" viewBox="650 666 310 22">
<path d="M657.5,668 v16 M663.5,668 v16 M750.5,668 v16 M757.5,668 v16 M765.5,668 v16" stroke="#fafbfc" stroke-width="1.2"/>
<path d="M656.5,668 v16 M662.5,668 v16 M749.5,668 v16 M756.5,668 v16 M764.5,668 v16" stroke="#c4c8ce" stroke-width="1"/>
<path d="M857,677 h6 l-3,-3 z" fill="#333"/>
<rect x="880.5" y="667.5" width="12" height="12" fill="#f8fcf4" stroke="#507050" stroke-width="1"/>
<text x="883" y="677.5" font-size="10" font-weight="bold" fill="#20a020" font-family="Liberation Sans">?</text>
<path d="M941,673 l-2,3 l2,3" fill="none" stroke="#e0a020" stroke-width="1.2"/>
</svg>
<div class="t" style="left:668px;top:670px;font-size:12px;color:#2a2a30">Editando Peça</div>
<div class="t" style="left:800px;top:670px;font-size:11.4px;letter-spacing:-.3px;color:#2a2a30">MMGS</div>

<div id="taskbar" class="a"></div>
<div class="a" style="left:0;top:689px;width:112px;height:31px;background:linear-gradient(#4ab84a 0%,#3aa03a 20%,#2f922f 70%,#2a7e2a 100%);border-radius:0 10px 10px 0;box-shadow:inset -2px 0 3px #1e6a1e"></div>
<svg class="a" style="left:8px;top:696px" width="22" height="20" viewBox="0 0 22 20">
<path d="M3,3 q4,-2 7,0 l-1,6 q-3,-2 -7,0 z" fill="#f05a28"/><path d="M11,3 q4,2 8,0 l-1,6 q-4,2 -8,0 z" fill="#7cbf30"/>
<path d="M2,10 q4,-2 7,0 l-1,6 q-3,-2 -7,0 z" fill="#30a0e8"/><path d="M10,10 q4,2 8,0 l-1,6 q-4,2 -8,0 z" fill="#f8c020"/>
</svg>
<div class="t" style="left:32px;top:697px;font-size:19.5px;font-weight:bold;font-style:italic;color:#fff;text-shadow:1px 1px 1px #1a4a1a">Iniciar</div>
<svg class="a" style="left:118px;top:692px" width="10" height="26" viewBox="0 0 10 26"><g fill="#1a3a9a"><rect x="2" y="2" width="2" height="2"/><rect x="2" y="6" width="2" height="2"/><rect x="2" y="10" width="2" height="2"/><rect x="2" y="14" width="2" height="2"/><rect x="2" y="18" width="2" height="2"/><rect x="2" y="22" width="2" height="2"/></g><g fill="#6a9af0"><rect x="3" y="3" width="1" height="1"/><rect x="3" y="7" width="1" height="1"/><rect x="3" y="11" width="1" height="1"/><rect x="3" y="15" width="1" height="1"/><rect x="3" y="19" width="1" height="1"/></g></svg>
<div class="a" style="left:131px;top:692px;width:112px;height:26px;background:#1e4cc0;border-radius:3px;box-shadow:inset 1px 1px 2px #0a2a80"></div>
<div class="a" style="left:247px;top:692px;width:116px;height:26px;background:linear-gradient(#4a90f8,#3878ec);border-radius:3px"></div>
<div class="a" style="left:365px;top:692px;width:115px;height:26px;background:linear-gradient(#4a90f8,#3878ec);border-radius:3px"></div>
<div class="a" style="left:482px;top:692px;width:115px;height:26px;background:linear-gradient(#4a90f8,#3878ec);border-radius:3px"></div>
<div class="a" style="left:599px;top:692px;width:117px;height:26px;background:linear-gradient(#4a90f8,#3878ec);border-radius:3px"></div>
<div class="a" style="left:716px;top:692px;width:116px;height:26px;background:linear-gradient(#4a90f8,#3878ec);border-radius:3px"></div>
<div class="a" style="left:883px;top:688px;width:77px;height:32px;background:linear-gradient(#2aa4f4,#1390e8 20%,#1188e0 80%,#0a70c8);border-left:1px solid #0a5ab0"></div>
<svg class="a" style="left:131px;top:692px" width="829" height="28" viewBox="131 692 829 28">
<path d="M141,698 l8,-3 l6,3 v11 l-8,3 l-6,-3 z" fill="#c82020"/><text x="142" y="708" font-size="7" font-weight="bold" fill="#fff" font-family="Liberation Sans">SW</text>
<path d="M256,699 h5 l2,2 h8 v10 h-15 z" fill="#f0d060" stroke="#b08830" stroke-width=".8"/>
<path d="M353,704 h7 l-3.5,3.5 z M705,704 h7 l-3.5,3.5 z M48,704" fill="#fff"/>
<circle cx="381" cy="705" r="6.5" fill="#e03a2a"/><path d="M381,705 L375.4,708.3 A6.5,6.5 0 0 0 386.6,708.3 Z" fill="#40a840"/><path d="M381,705 L386.6,708.3 A6.5,6.5 0 0 0 381,698.5 Z" fill="#f8c820"/><circle cx="381" cy="705" r="2.8" fill="#4a88f0" stroke="#fff" stroke-width="1"/>
<rect x="491" y="699" width="13" height="13" fill="#fff" stroke="#c02020" stroke-width="1"/><path d="M493,702 h9 M497,700 v10 M494,708 q3,-5 7,0" stroke="#c82020" stroke-width="1.4" fill="none"/>
<path d="M609,700 l5,-2 l5,2 l-1,11 h-8 z" fill="#f0c040" stroke="#806020" stroke-width=".8"/><path d="M611,703 l3,4 l3,-5" stroke="#c02060" stroke-width="1.4" fill="none"/>
<rect x="725" y="698" width="14" height="14" rx="1.5" fill="#fff" stroke="#2a5ab0" stroke-width="1"/><rect x="726" y="699" width="12" height="12" fill="#2a5ab0"/><text x="727" y="709.5" font-size="10" font-weight="bold" fill="#fff" font-family="Liberation Sans">W</text>
<g fill="#1c48b0"><rect x="836" y="694" width="2" height="2"/><rect x="836" y="698" width="2" height="2"/><rect x="836" y="702" width="2" height="2"/><rect x="836" y="706" width="2" height="2"/><rect x="836" y="710" width="2" height="2"/><rect x="836" y="714" width="2" height="2"/></g>
<circle cx="884.5" cy="705" r="7.5" fill="#d8ecfc" stroke="#3a88d8" stroke-width="1"/><path d="M886,701.5 l-3,3.5 l3,3.5" fill="none" stroke="#1a60c0" stroke-width="1.8"/>
<rect x="896" y="702" width="8" height="7" fill="#1a2a60" stroke="#d0d8e8" stroke-width=".8"/><path d="M893,711 h9" stroke="#fff" stroke-width="1.5"/><path d="M906,699 a3,3 0 0 1 0,5 M908,697 a5,5 0 0 1 0,9" fill="none" stroke="#fff" stroke-width=".8"/>
</svg>
<div class="t" style="left:158px;top:700px;font-size:12px;color:#fff">SolidWorks ...</div>
<div class="t" style="left:274px;top:700px;font-size:12px;color:#fff">3 Window...</div>
<div class="t" style="left:391px;top:700px;font-size:12px;color:#fff">Mundo da U...</div>
<div class="t" style="left:508px;top:700px;font-size:12px;color:#fff">montagem....</div>
<div class="t" style="left:625px;top:700px;font-size:12px;color:#fff">2 Paint</div>
<div class="t" style="left:743px;top:700px;font-size:12px;color:#fff">Documento...</div>
<div class="t" style="left:850px;top:700px;font-size:12px;color:#fff">PT</div>
<div class="t" style="left:916px;top:700px;font-size:12px;color:#fff">02:01</div>

</body></html>
